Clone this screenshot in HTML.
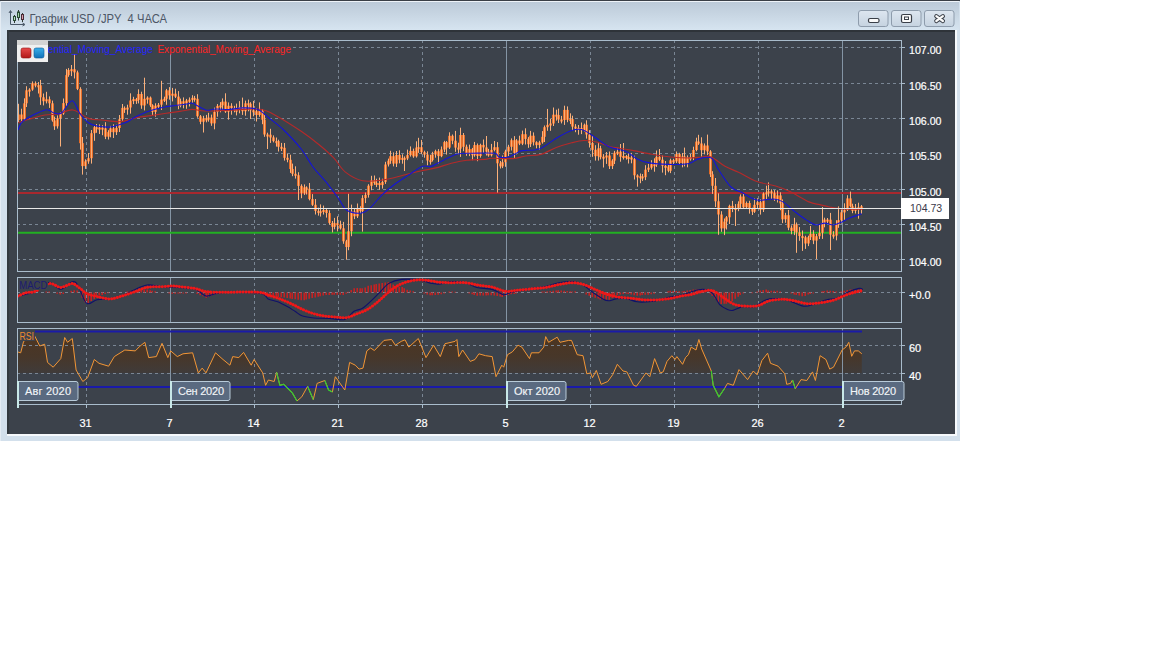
<!DOCTYPE html><html><head><meta charset="utf-8"><style>html,body{margin:0;padding:0;background:#fff;overflow:hidden}svg{display:block}</style></head><body>
<svg width="1152" height="648" viewBox="0 0 1152 648" style="font-family:'Liberation Sans',sans-serif">
<defs><linearGradient id="tg" x1="0" y1="0" x2="0" y2="1"><stop offset="0" stop-color="#bccad8"/><stop offset="1" stop-color="#d6e4f0"/></linearGradient><linearGradient id="bg" x1="0" y1="0" x2="0" y2="1"><stop offset="0" stop-color="#dde6f0"/><stop offset="1" stop-color="#c6d3e0"/></linearGradient><linearGradient id="lr" x1="0" y1="0" x2="0" y2="1"><stop offset="0" stop-color="#e84a4a"/><stop offset="1" stop-color="#b01818"/></linearGradient><linearGradient id="lb" x1="0" y1="0" x2="0" y2="1"><stop offset="0" stop-color="#3ab0ea"/><stop offset="1" stop-color="#1070b8"/></linearGradient><linearGradient id="rf" gradientUnits="userSpaceOnUse" x1="0" y1="334" x2="0" y2="373"><stop offset="0" stop-color="#4d3520"/><stop offset="0.6" stop-color="#47372a"/><stop offset="1" stop-color="#3f3b3a"/></linearGradient><clipPath id="cm"><rect x="18" y="41" width="883" height="230"/></clipPath><clipPath id="cmacd"><rect x="18" y="278" width="883" height="44"/></clipPath><clipPath id="crsi"><rect x="18" y="329" width="883" height="75"/></clipPath><clipPath id="cfill"><rect x="18" y="329" width="883" height="44"/></clipPath></defs>
<rect x="0" y="0" width="960" height="441" fill="#d3e0ec"/>
<rect x="0" y="0" width="960" height="1" fill="#3a3f46"/>
<rect x="1" y="1" width="958" height="1" fill="#eef3f8"/>
<rect x="1" y="2" width="958" height="28" fill="url(#tg)"/>
<rect x="0" y="2" width="1" height="439" fill="#e4ecf4"/>
<rect x="7" y="30" width="948" height="404" fill="#3c424b"/>
<rect x="7" y="30" width="948" height="2" fill="#2e3339"/>
<rect x="7" y="30" width="2" height="404" fill="#33393f"/>
<rect x="955" y="30" width="2" height="406" fill="#f6f9fc"/>
<rect x="7" y="434" width="950" height="2" fill="#f6f9fc"/>
<g stroke="#4a5868" stroke-width="1" fill="none"><path d="M10.5,11 V24.5 H24"/><path d="M9,13 L10.5,10.5 L12,13"/><path d="M22.5,23 L25,24.5 L22.5,26"/></g>
<path d="M14.5,15 V23 M18.5,10 V20.5 M22.5,13 V22" stroke="#2e3a34" stroke-width="1"/>
<rect x="13.5" y="16.5" width="2" height="4" fill="#b8dcc0" stroke="#2a4a34" stroke-width="1"/>
<rect x="17.5" y="12" width="2" height="5.5" fill="#a0d0a8" stroke="#2a4a34" stroke-width="1"/>
<rect x="21.5" y="14.5" width="2" height="5" fill="#d8a0b0" stroke="#4a2a34" stroke-width="1"/>
<text x="29.5" y="22.8" font-size="12" fill="#4c5666" xml:space="preserve" textLength="137.5" lengthAdjust="spacingAndGlyphs">График USD /JPY  4 ЧАСА</text>
<rect x="858.5" y="10.5" width="29.5" height="16" rx="2.5" fill="url(#bg)" stroke="#8e9cac" stroke-width="1"/>
<rect x="891.5" y="10.5" width="29.5" height="16" rx="2.5" fill="url(#bg)" stroke="#8e9cac" stroke-width="1"/>
<rect x="924.5" y="10.5" width="29.5" height="16" rx="2.5" fill="url(#bg)" stroke="#8e9cac" stroke-width="1"/>
<rect x="868.5" y="18.5" width="10.5" height="4" rx="1.5" fill="#fafafa" stroke="#3a3f48" stroke-width="1.2"/>
<rect x="901.5" y="14.5" width="10" height="8" rx="1.5" fill="#fafafa" stroke="#3a3f48" stroke-width="1.2"/><rect x="904.5" y="17" width="4" height="2.5" fill="none" stroke="#3a3f48" stroke-width="1"/>
<path d="M936.3,16.2 L942.9,21 M942.9,16.2 L936.3,21" stroke="#3a3f48" stroke-width="4.2" stroke-linecap="round"/><path d="M936.3,16.2 L942.9,21 M942.9,16.2 L936.3,21" stroke="#fafafa" stroke-width="2.2" stroke-linecap="round"/>
<rect x="17.5" y="40.5" width="884" height="231.0" fill="none" stroke="#a9bccc" stroke-width="1"/>
<rect x="17.5" y="277.5" width="884" height="45.0" fill="none" stroke="#a9bccc" stroke-width="1"/>
<rect x="17.5" y="328.5" width="884" height="76.0" fill="none" stroke="#a9bccc" stroke-width="1"/>
<path d="M18.0,373.0 L18.0,352.0 L20.7,352.8 L23.6,341.4 L34.0,334.7 L39.8,346.0 L44.6,344.2 L47.5,362.4 L53.2,367.2 L60.8,358.6 L64.7,337.5 L67.5,342.3 L72.3,338.5 L76.1,370.0 L82.8,381.5 L87.6,377.7 L94.3,359.5 L99.0,363.3 L108.6,366.2 L114.3,356.6 L124.8,350.0 L135.3,350.9 L140.0,346.1 L144.9,342.3 L148.7,357.6 L156.3,356.6 L162.0,343.3 L167.8,357.6 L170.7,350.9 L177.3,356.6 L183.0,353.8 L192.6,352.8 L198.3,372.9 L202.2,368.1 L206.0,372.9 L215.5,352.8 L223.0,359.5 L229.9,365.2 L232.7,356.6 L238.8,357.6 L243.6,352.4 L251.2,365.2 L254.1,359.5 L262.7,372.9 L265.6,385.3 L268.4,380.0 L274.2,381.5 L276.6,372.3 L279.9,385.3 L283.7,384.3 L292.3,392.9 L297.0,401.0 L301.8,396.8 L307.6,386.3 L313.3,399.6 L317.1,383.4 L324.8,380.5 L328.6,390.0 L332.4,392.0 L335.3,376.7 L344.8,390.0 L349.6,362.4 L355.3,365.2 L359.1,369.1 L363.0,368.1 L366.8,350.9 L370.6,348.0 L374.4,350.5 L384.0,340.4 L391.6,339.5 L395.4,345.2 L401.2,341.4 L405.0,339.8 L408.8,347.1 L418.3,338.5 L426.0,357.6 L433.6,345.2 L440.3,356.6 L445.0,343.7 L455.0,341.4 L456.9,339.5 L458.8,356.6 L462.6,350.0 L470.3,361.4 L475.0,359.5 L478.9,353.8 L485.6,355.7 L492.2,356.6 L496.0,376.7 L501.8,365.2 L503.7,367.2 L507.5,354.7 L512.3,351.9 L518.0,345.2 L521.8,347.1 L529.5,358.6 L531.4,352.8 L539.0,352.8 L543.8,347.1 L545.7,336.6 L548.6,342.3 L557.2,337.2 L560.0,342.3 L568.6,340.4 L571.5,340.4 L577.2,354.7 L583.0,355.7 L586.8,373.8 L590.6,372.9 L592.5,377.7 L596.3,370.4 L601.1,384.3 L607.8,381.5 L612.6,374.8 L617.3,364.3 L623.0,371.0 L626.9,371.9 L633.6,385.3 L636.4,386.3 L646.0,372.9 L649.8,376.7 L654.6,358.6 L660.3,372.9 L663.2,371.9 L667.0,361.4 L671.8,355.7 L675.0,359.5 L676.9,356.6 L682.6,364.3 L685.5,357.6 L688.4,354.7 L691.2,347.1 L696.0,350.0 L698.9,339.5 L701.7,349.0 L711.3,371.0 L713.2,385.3 L718.9,396.8 L724.7,388.2 L727.5,383.4 L733.3,385.3 L739.0,369.6 L747.6,379.6 L753.3,371.0 L757.1,374.8 L761.9,360.5 L767.6,353.2 L770.5,363.3 L778.1,366.2 L784.8,373.8 L786.7,384.3 L790.5,383.4 L792.5,380.0 L795.3,388.7 L801.0,379.6 L806.8,380.5 L812.5,371.9 L815.4,380.5 L820.1,355.7 L825.9,359.5 L829.7,369.1 L833.5,367.2 L842.1,350.0 L845.9,347.1 L848.8,342.3 L851.7,356.3 L854.5,350.9 L858.3,350.9 L861.8,353.8 L861.8,373.0 Z" fill="url(#rf)" clip-path="url(#cfill)"/>
<path d="M18,47.5 H901" stroke="#7a8694" stroke-width="1" stroke-dasharray="3,3" stroke-dashoffset="1"/>
<path d="M901,47.5 H905" stroke="#a9bccc" stroke-width="1"/>
<text x="909" y="54.0" font-size="11" fill="#ffffff" stroke="#ffffff" stroke-width="0.2" textLength="32.5" lengthAdjust="spacingAndGlyphs">107.00</text>
<path d="M18,83.5 H901" stroke="#7a8694" stroke-width="1" stroke-dasharray="3,3" stroke-dashoffset="1"/>
<path d="M901,83.5 H905" stroke="#a9bccc" stroke-width="1"/>
<text x="909" y="90.0" font-size="11" fill="#ffffff" stroke="#ffffff" stroke-width="0.2" textLength="32.5" lengthAdjust="spacingAndGlyphs">106.50</text>
<path d="M18,118.5 H901" stroke="#7a8694" stroke-width="1" stroke-dasharray="3,3" stroke-dashoffset="1"/>
<path d="M901,118.5 H905" stroke="#a9bccc" stroke-width="1"/>
<text x="909" y="125.0" font-size="11" fill="#ffffff" stroke="#ffffff" stroke-width="0.2" textLength="32.5" lengthAdjust="spacingAndGlyphs">106.00</text>
<path d="M18,153.5 H901" stroke="#7a8694" stroke-width="1" stroke-dasharray="3,3" stroke-dashoffset="1"/>
<path d="M901,153.5 H905" stroke="#a9bccc" stroke-width="1"/>
<text x="909" y="160.0" font-size="11" fill="#ffffff" stroke="#ffffff" stroke-width="0.2" textLength="32.5" lengthAdjust="spacingAndGlyphs">105.50</text>
<path d="M18,189.5 H901" stroke="#7a8694" stroke-width="1" stroke-dasharray="3,3" stroke-dashoffset="1"/>
<path d="M901,189.5 H905" stroke="#a9bccc" stroke-width="1"/>
<text x="909" y="196.0" font-size="11" fill="#ffffff" stroke="#ffffff" stroke-width="0.2" textLength="32.5" lengthAdjust="spacingAndGlyphs">105.00</text>
<path d="M18,224.5 H901" stroke="#7a8694" stroke-width="1" stroke-dasharray="3,3" stroke-dashoffset="1"/>
<path d="M901,224.5 H905" stroke="#a9bccc" stroke-width="1"/>
<text x="909" y="231.0" font-size="11" fill="#ffffff" stroke="#ffffff" stroke-width="0.2" textLength="32.5" lengthAdjust="spacingAndGlyphs">104.50</text>
<path d="M18,259.5 H901" stroke="#7a8694" stroke-width="1" stroke-dasharray="3,3" stroke-dashoffset="1"/>
<path d="M901,259.5 H905" stroke="#a9bccc" stroke-width="1"/>
<text x="909" y="266.0" font-size="11" fill="#ffffff" stroke="#ffffff" stroke-width="0.2" textLength="32.5" lengthAdjust="spacingAndGlyphs">104.00</text>
<path d="M18,292.5 H901" stroke="#7a8694" stroke-width="1" stroke-dasharray="3,3" stroke-dashoffset="1"/>
<path d="M901,292.5 H905" stroke="#a9bccc"/>
<text x="909" y="299" font-size="11" fill="#ffffff" stroke="#ffffff" stroke-width="0.2">+0.0</text>
<path d="M18,345.5 H901" stroke="#7a8694" stroke-width="1" stroke-dasharray="3,3" stroke-dashoffset="1"/>
<path d="M901,345.5 H905" stroke="#a9bccc"/>
<text x="909" y="351.5" font-size="11" fill="#ffffff" stroke="#ffffff" stroke-width="0.2">60</text>
<path d="M18,373.5 H901" stroke="#7a8694" stroke-width="1" stroke-dasharray="3,3" stroke-dashoffset="1"/>
<path d="M901,373.5 H905" stroke="#a9bccc"/>
<text x="909" y="379.5" font-size="11" fill="#ffffff" stroke="#ffffff" stroke-width="0.2">40</text>
<path d="M86.5,41.0 V271.0" stroke="#7a8694" stroke-width="1" stroke-dasharray="3,3" stroke-dashoffset="1"/>
<path d="M86.5,278.0 V322.0" stroke="#7a8694" stroke-width="1" stroke-dasharray="3,3" stroke-dashoffset="1"/>
<path d="M86.5,329.0 V404.0" stroke="#7a8694" stroke-width="1" stroke-dasharray="3,3" stroke-dashoffset="1"/>
<path d="M86.5,404.5 V408" stroke="#a9bccc"/>
<text x="85.5" y="427" font-size="11" fill="#ffffff" stroke="#ffffff" stroke-width="0.2" text-anchor="middle">31</text>
<path d="M170.5,41.0 V271.0" stroke="#8494a4" stroke-width="1"/>
<path d="M170.5,278.0 V322.0" stroke="#8494a4" stroke-width="1"/>
<path d="M170.5,329.0 V404.0" stroke="#8494a4" stroke-width="1"/>
<path d="M170.5,404.5 V408" stroke="#a9bccc"/>
<text x="169.5" y="427" font-size="11" fill="#ffffff" stroke="#ffffff" stroke-width="0.2" text-anchor="middle">7</text>
<path d="M254.5,41.0 V271.0" stroke="#7a8694" stroke-width="1" stroke-dasharray="3,3" stroke-dashoffset="1"/>
<path d="M254.5,278.0 V322.0" stroke="#7a8694" stroke-width="1" stroke-dasharray="3,3" stroke-dashoffset="1"/>
<path d="M254.5,329.0 V404.0" stroke="#7a8694" stroke-width="1" stroke-dasharray="3,3" stroke-dashoffset="1"/>
<path d="M254.5,404.5 V408" stroke="#a9bccc"/>
<text x="253.5" y="427" font-size="11" fill="#ffffff" stroke="#ffffff" stroke-width="0.2" text-anchor="middle">14</text>
<path d="M338.5,41.0 V271.0" stroke="#7a8694" stroke-width="1" stroke-dasharray="3,3" stroke-dashoffset="1"/>
<path d="M338.5,278.0 V322.0" stroke="#7a8694" stroke-width="1" stroke-dasharray="3,3" stroke-dashoffset="1"/>
<path d="M338.5,329.0 V404.0" stroke="#7a8694" stroke-width="1" stroke-dasharray="3,3" stroke-dashoffset="1"/>
<path d="M338.5,404.5 V408" stroke="#a9bccc"/>
<text x="337.5" y="427" font-size="11" fill="#ffffff" stroke="#ffffff" stroke-width="0.2" text-anchor="middle">21</text>
<path d="M422.5,41.0 V271.0" stroke="#7a8694" stroke-width="1" stroke-dasharray="3,3" stroke-dashoffset="1"/>
<path d="M422.5,278.0 V322.0" stroke="#7a8694" stroke-width="1" stroke-dasharray="3,3" stroke-dashoffset="1"/>
<path d="M422.5,329.0 V404.0" stroke="#7a8694" stroke-width="1" stroke-dasharray="3,3" stroke-dashoffset="1"/>
<path d="M422.5,404.5 V408" stroke="#a9bccc"/>
<text x="421.5" y="427" font-size="11" fill="#ffffff" stroke="#ffffff" stroke-width="0.2" text-anchor="middle">28</text>
<path d="M506.5,41.0 V271.0" stroke="#8494a4" stroke-width="1"/>
<path d="M506.5,278.0 V322.0" stroke="#8494a4" stroke-width="1"/>
<path d="M506.5,329.0 V404.0" stroke="#8494a4" stroke-width="1"/>
<path d="M506.5,404.5 V408" stroke="#a9bccc"/>
<text x="505.5" y="427" font-size="11" fill="#ffffff" stroke="#ffffff" stroke-width="0.2" text-anchor="middle">5</text>
<path d="M590.5,41.0 V271.0" stroke="#7a8694" stroke-width="1" stroke-dasharray="3,3" stroke-dashoffset="1"/>
<path d="M590.5,278.0 V322.0" stroke="#7a8694" stroke-width="1" stroke-dasharray="3,3" stroke-dashoffset="1"/>
<path d="M590.5,329.0 V404.0" stroke="#7a8694" stroke-width="1" stroke-dasharray="3,3" stroke-dashoffset="1"/>
<path d="M590.5,404.5 V408" stroke="#a9bccc"/>
<text x="589.5" y="427" font-size="11" fill="#ffffff" stroke="#ffffff" stroke-width="0.2" text-anchor="middle">12</text>
<path d="M674.5,41.0 V271.0" stroke="#7a8694" stroke-width="1" stroke-dasharray="3,3" stroke-dashoffset="1"/>
<path d="M674.5,278.0 V322.0" stroke="#7a8694" stroke-width="1" stroke-dasharray="3,3" stroke-dashoffset="1"/>
<path d="M674.5,329.0 V404.0" stroke="#7a8694" stroke-width="1" stroke-dasharray="3,3" stroke-dashoffset="1"/>
<path d="M674.5,404.5 V408" stroke="#a9bccc"/>
<text x="673.5" y="427" font-size="11" fill="#ffffff" stroke="#ffffff" stroke-width="0.2" text-anchor="middle">19</text>
<path d="M758.5,41.0 V271.0" stroke="#7a8694" stroke-width="1" stroke-dasharray="3,3" stroke-dashoffset="1"/>
<path d="M758.5,278.0 V322.0" stroke="#7a8694" stroke-width="1" stroke-dasharray="3,3" stroke-dashoffset="1"/>
<path d="M758.5,329.0 V404.0" stroke="#7a8694" stroke-width="1" stroke-dasharray="3,3" stroke-dashoffset="1"/>
<path d="M758.5,404.5 V408" stroke="#a9bccc"/>
<text x="757.5" y="427" font-size="11" fill="#ffffff" stroke="#ffffff" stroke-width="0.2" text-anchor="middle">26</text>
<path d="M842.5,41.0 V271.0" stroke="#8494a4" stroke-width="1"/>
<path d="M842.5,278.0 V322.0" stroke="#8494a4" stroke-width="1"/>
<path d="M842.5,329.0 V404.0" stroke="#8494a4" stroke-width="1"/>
<path d="M842.5,404.5 V408" stroke="#a9bccc"/>
<text x="841.5" y="427" font-size="11" fill="#ffffff" stroke="#ffffff" stroke-width="0.2" text-anchor="middle">2</text>
<g clip-path="url(#cm)">
<path d="M18,193 H901" stroke="#a8282e" stroke-width="2"/>
<path d="M18,232.8 H901" stroke="#22b022" stroke-width="2"/>
<rect x="17" y="114.5" width="3" height="5.5" fill="#e46c28"/>
<rect x="18" y="103.8" width="1" height="18.5" fill="#fbb07a"/>
<rect x="20" y="114.5" width="3" height="4.8" fill="#e46c28"/>
<rect x="21" y="108.7" width="1" height="14.2" fill="#fbb07a"/>
<rect x="23" y="103.3" width="3" height="15.9" fill="#e46c28"/>
<rect x="24" y="98.3" width="1" height="22.7" fill="#fbb07a"/>
<rect x="25" y="90.3" width="3" height="13.0" fill="#e46c28"/>
<rect x="26" y="86.2" width="1" height="20.8" fill="#fbb07a"/>
<rect x="28" y="89.6" width="3" height="2.0" fill="#e46c28"/>
<rect x="29" y="88.2" width="1" height="8.4" fill="#fbb07a"/>
<rect x="31" y="83.2" width="3" height="6.4" fill="#e46c28"/>
<rect x="32" y="81.4" width="1" height="9.4" fill="#fbb07a"/>
<rect x="34" y="83.2" width="3" height="2.4" fill="#e46c28"/>
<rect x="35" y="81.4" width="1" height="5.9" fill="#fbb07a"/>
<rect x="37" y="85.3" width="3" height="2.0" fill="#e46c28"/>
<rect x="38" y="82.0" width="1" height="11.5" fill="#fbb07a"/>
<rect x="39" y="85.3" width="3" height="12.0" fill="#e46c28"/>
<rect x="40" y="79.9" width="1" height="25.0" fill="#fbb07a"/>
<rect x="42" y="97.3" width="3" height="3.9" fill="#e46c28"/>
<rect x="43" y="93.5" width="1" height="11.9" fill="#fbb07a"/>
<rect x="45" y="99.3" width="3" height="2.0" fill="#e46c28"/>
<rect x="46" y="91.8" width="1" height="11.6" fill="#fbb07a"/>
<rect x="48" y="99.3" width="3" height="4.0" fill="#e46c28"/>
<rect x="49" y="96.4" width="1" height="11.5" fill="#fbb07a"/>
<rect x="51" y="103.3" width="3" height="17.1" fill="#e46c28"/>
<rect x="52" y="100.6" width="1" height="21.1" fill="#fbb07a"/>
<rect x="53" y="120.4" width="3" height="5.9" fill="#e46c28"/>
<rect x="54" y="116.6" width="1" height="13.3" fill="#fbb07a"/>
<rect x="56" y="118.2" width="3" height="8.1" fill="#e46c28"/>
<rect x="57" y="115.4" width="1" height="13.2" fill="#fbb07a"/>
<rect x="59" y="113.4" width="3" height="4.8" fill="#e46c28"/>
<rect x="60" y="112.2" width="1" height="34.3" fill="#fbb07a"/>
<rect x="62" y="103.1" width="3" height="10.4" fill="#e46c28"/>
<rect x="63" y="98.5" width="1" height="16.3" fill="#fbb07a"/>
<rect x="65" y="75.1" width="3" height="28.0" fill="#e46c28"/>
<rect x="66" y="68.9" width="1" height="37.1" fill="#fbb07a"/>
<rect x="67" y="70.0" width="3" height="5.1" fill="#e46c28"/>
<rect x="68" y="68.1" width="1" height="8.7" fill="#fbb07a"/>
<rect x="70" y="69.2" width="3" height="2.0" fill="#e46c28"/>
<rect x="71" y="65.0" width="1" height="11.1" fill="#fbb07a"/>
<rect x="73" y="69.2" width="3" height="3.2" fill="#e46c28"/>
<rect x="74" y="53.6" width="1" height="24.9" fill="#fbb07a"/>
<rect x="76" y="72.4" width="3" height="16.5" fill="#e46c28"/>
<rect x="77" y="70.6" width="1" height="19.5" fill="#fbb07a"/>
<rect x="79" y="88.9" width="3" height="54.3" fill="#e46c28"/>
<rect x="80" y="87.2" width="1" height="62.4" fill="#fbb07a"/>
<rect x="81" y="143.1" width="3" height="23.0" fill="#e46c28"/>
<rect x="82" y="137.0" width="1" height="37.6" fill="#fbb07a"/>
<rect x="84" y="161.4" width="3" height="4.7" fill="#e46c28"/>
<rect x="85" y="159.3" width="1" height="9.6" fill="#fbb07a"/>
<rect x="87" y="158.2" width="3" height="3.2" fill="#e46c28"/>
<rect x="88" y="153.0" width="1" height="10.8" fill="#fbb07a"/>
<rect x="90" y="133.2" width="3" height="25.0" fill="#e46c28"/>
<rect x="91" y="130.0" width="1" height="33.6" fill="#fbb07a"/>
<rect x="93" y="127.2" width="3" height="6.0" fill="#e46c28"/>
<rect x="94" y="126.0" width="1" height="14.8" fill="#fbb07a"/>
<rect x="95" y="127.2" width="3" height="2.0" fill="#e46c28"/>
<rect x="96" y="124.0" width="1" height="8.8" fill="#fbb07a"/>
<rect x="98" y="127.6" width="3" height="2.0" fill="#e46c28"/>
<rect x="99" y="124.4" width="1" height="9.6" fill="#fbb07a"/>
<rect x="101" y="127.6" width="3" height="2.0" fill="#e46c28"/>
<rect x="102" y="125.2" width="1" height="10.0" fill="#fbb07a"/>
<rect x="104" y="128.4" width="3" height="8.3" fill="#e46c28"/>
<rect x="105" y="122.2" width="1" height="16.9" fill="#fbb07a"/>
<rect x="107" y="132.1" width="3" height="4.6" fill="#e46c28"/>
<rect x="108" y="130.2" width="1" height="9.3" fill="#fbb07a"/>
<rect x="109" y="128.4" width="3" height="3.7" fill="#e46c28"/>
<rect x="110" y="125.9" width="1" height="11.4" fill="#fbb07a"/>
<rect x="112" y="128.4" width="3" height="3.8" fill="#e46c28"/>
<rect x="113" y="124.3" width="1" height="13.7" fill="#fbb07a"/>
<rect x="115" y="128.0" width="3" height="4.2" fill="#e46c28"/>
<rect x="116" y="124.8" width="1" height="10.2" fill="#fbb07a"/>
<rect x="118" y="119.3" width="3" height="8.7" fill="#e46c28"/>
<rect x="119" y="115.0" width="1" height="17.0" fill="#fbb07a"/>
<rect x="121" y="107.9" width="3" height="11.3" fill="#e46c28"/>
<rect x="122" y="104.0" width="1" height="16.9" fill="#fbb07a"/>
<rect x="123" y="107.9" width="3" height="2.0" fill="#e46c28"/>
<rect x="124" y="106.4" width="1" height="6.5" fill="#fbb07a"/>
<rect x="126" y="107.6" width="3" height="2.0" fill="#e46c28"/>
<rect x="127" y="104.7" width="1" height="10.0" fill="#fbb07a"/>
<rect x="129" y="100.5" width="3" height="7.0" fill="#e46c28"/>
<rect x="130" y="93.3" width="1" height="20.3" fill="#fbb07a"/>
<rect x="132" y="99.1" width="3" height="2.0" fill="#e46c28"/>
<rect x="133" y="96.8" width="1" height="7.3" fill="#fbb07a"/>
<rect x="135" y="99.1" width="3" height="2.0" fill="#e46c28"/>
<rect x="136" y="97.9" width="1" height="6.0" fill="#fbb07a"/>
<rect x="137" y="94.0" width="3" height="5.9" fill="#e46c28"/>
<rect x="138" y="89.3" width="1" height="14.1" fill="#fbb07a"/>
<rect x="140" y="94.0" width="3" height="11.4" fill="#e46c28"/>
<rect x="141" y="91.7" width="1" height="17.1" fill="#fbb07a"/>
<rect x="143" y="98.8" width="3" height="6.7" fill="#e46c28"/>
<rect x="144" y="77.7" width="1" height="32.7" fill="#fbb07a"/>
<rect x="146" y="97.6" width="3" height="2.0" fill="#e46c28"/>
<rect x="147" y="96.3" width="1" height="7.4" fill="#fbb07a"/>
<rect x="149" y="97.6" width="3" height="7.7" fill="#e46c28"/>
<rect x="150" y="96.5" width="1" height="10.4" fill="#fbb07a"/>
<rect x="151" y="105.2" width="3" height="6.6" fill="#e46c28"/>
<rect x="152" y="104.2" width="1" height="10.9" fill="#fbb07a"/>
<rect x="154" y="105.7" width="3" height="6.2" fill="#e46c28"/>
<rect x="155" y="103.3" width="1" height="13.4" fill="#fbb07a"/>
<rect x="157" y="104.8" width="3" height="2.0" fill="#e46c28"/>
<rect x="158" y="103.0" width="1" height="5.3" fill="#fbb07a"/>
<rect x="160" y="99.6" width="3" height="5.1" fill="#e46c28"/>
<rect x="161" y="80.8" width="1" height="29.2" fill="#fbb07a"/>
<rect x="163" y="98.8" width="3" height="2.0" fill="#e46c28"/>
<rect x="164" y="96.7" width="1" height="5.3" fill="#fbb07a"/>
<rect x="165" y="90.3" width="3" height="8.5" fill="#e46c28"/>
<rect x="166" y="88.9" width="1" height="15.9" fill="#fbb07a"/>
<rect x="168" y="90.3" width="3" height="5.1" fill="#e46c28"/>
<rect x="169" y="87.1" width="1" height="12.6" fill="#fbb07a"/>
<rect x="171" y="93.7" width="3" height="2.0" fill="#e46c28"/>
<rect x="172" y="87.9" width="1" height="13.5" fill="#fbb07a"/>
<rect x="174" y="93.7" width="3" height="3.0" fill="#e46c28"/>
<rect x="175" y="88.7" width="1" height="9.3" fill="#fbb07a"/>
<rect x="177" y="96.6" width="3" height="9.1" fill="#e46c28"/>
<rect x="178" y="91.1" width="1" height="18.1" fill="#fbb07a"/>
<rect x="179" y="101.3" width="3" height="4.4" fill="#e46c28"/>
<rect x="180" y="98.6" width="1" height="8.7" fill="#fbb07a"/>
<rect x="182" y="101.3" width="3" height="2.3" fill="#e46c28"/>
<rect x="183" y="97.4" width="1" height="10.9" fill="#fbb07a"/>
<rect x="185" y="100.5" width="3" height="3.1" fill="#e46c28"/>
<rect x="186" y="98.9" width="1" height="9.9" fill="#fbb07a"/>
<rect x="188" y="99.7" width="3" height="2.0" fill="#e46c28"/>
<rect x="189" y="97.4" width="1" height="9.1" fill="#fbb07a"/>
<rect x="191" y="97.9" width="3" height="2.0" fill="#e46c28"/>
<rect x="192" y="95.2" width="1" height="7.6" fill="#fbb07a"/>
<rect x="193" y="97.9" width="3" height="2.0" fill="#e46c28"/>
<rect x="194" y="95.9" width="1" height="5.8" fill="#fbb07a"/>
<rect x="196" y="98.8" width="3" height="17.4" fill="#e46c28"/>
<rect x="197" y="94.2" width="1" height="23.5" fill="#fbb07a"/>
<rect x="199" y="116.3" width="3" height="5.5" fill="#e46c28"/>
<rect x="200" y="115.0" width="1" height="9.2" fill="#fbb07a"/>
<rect x="202" y="118.4" width="3" height="3.4" fill="#e46c28"/>
<rect x="203" y="115.8" width="1" height="16.7" fill="#fbb07a"/>
<rect x="205" y="118.4" width="3" height="2.0" fill="#e46c28"/>
<rect x="206" y="114.9" width="1" height="7.4" fill="#fbb07a"/>
<rect x="207" y="117.6" width="3" height="2.0" fill="#e46c28"/>
<rect x="208" y="112.8" width="1" height="8.9" fill="#fbb07a"/>
<rect x="210" y="117.6" width="3" height="5.8" fill="#e46c28"/>
<rect x="211" y="114.6" width="1" height="11.2" fill="#fbb07a"/>
<rect x="213" y="111.8" width="3" height="11.6" fill="#e46c28"/>
<rect x="214" y="107.6" width="1" height="21.7" fill="#fbb07a"/>
<rect x="216" y="105.9" width="3" height="5.9" fill="#e46c28"/>
<rect x="217" y="104.0" width="1" height="12.7" fill="#fbb07a"/>
<rect x="219" y="105.4" width="3" height="2.0" fill="#e46c28"/>
<rect x="220" y="102.1" width="1" height="10.2" fill="#fbb07a"/>
<rect x="221" y="101.6" width="3" height="3.8" fill="#e46c28"/>
<rect x="222" y="98.4" width="1" height="11.8" fill="#fbb07a"/>
<rect x="224" y="101.6" width="3" height="10.0" fill="#e46c28"/>
<rect x="225" y="93.3" width="1" height="19.6" fill="#fbb07a"/>
<rect x="227" y="105.8" width="3" height="5.9" fill="#e46c28"/>
<rect x="228" y="102.4" width="1" height="17.2" fill="#fbb07a"/>
<rect x="230" y="105.8" width="3" height="2.2" fill="#e46c28"/>
<rect x="231" y="103.2" width="1" height="11.5" fill="#fbb07a"/>
<rect x="233" y="108.0" width="3" height="2.0" fill="#e46c28"/>
<rect x="234" y="105.8" width="1" height="6.5" fill="#fbb07a"/>
<rect x="235" y="109.7" width="3" height="2.0" fill="#e46c28"/>
<rect x="236" y="103.6" width="1" height="11.8" fill="#fbb07a"/>
<rect x="238" y="107.3" width="3" height="2.5" fill="#e46c28"/>
<rect x="239" y="101.1" width="1" height="12.2" fill="#fbb07a"/>
<rect x="241" y="107.3" width="3" height="3.9" fill="#e46c28"/>
<rect x="242" y="97.6" width="1" height="17.3" fill="#fbb07a"/>
<rect x="244" y="103.3" width="3" height="7.9" fill="#e46c28"/>
<rect x="245" y="100.6" width="1" height="15.1" fill="#fbb07a"/>
<rect x="247" y="103.3" width="3" height="2.0" fill="#e46c28"/>
<rect x="248" y="99.6" width="1" height="11.7" fill="#fbb07a"/>
<rect x="249" y="103.7" width="3" height="6.6" fill="#e46c28"/>
<rect x="250" y="102.2" width="1" height="16.8" fill="#fbb07a"/>
<rect x="252" y="110.3" width="3" height="2.0" fill="#e46c28"/>
<rect x="253" y="100.9" width="1" height="15.4" fill="#fbb07a"/>
<rect x="255" y="111.2" width="3" height="3.8" fill="#e46c28"/>
<rect x="256" y="108.3" width="1" height="13.2" fill="#fbb07a"/>
<rect x="258" y="110.7" width="3" height="4.3" fill="#e46c28"/>
<rect x="259" y="102.4" width="1" height="14.4" fill="#fbb07a"/>
<rect x="261" y="110.7" width="3" height="9.0" fill="#e46c28"/>
<rect x="262" y="109.0" width="1" height="15.2" fill="#fbb07a"/>
<rect x="263" y="119.6" width="3" height="14.9" fill="#e46c28"/>
<rect x="264" y="115.1" width="1" height="21.7" fill="#fbb07a"/>
<rect x="266" y="134.5" width="3" height="2.0" fill="#e46c28"/>
<rect x="267" y="132.7" width="1" height="16.3" fill="#fbb07a"/>
<rect x="269" y="134.7" width="3" height="2.8" fill="#e46c28"/>
<rect x="270" y="128.8" width="1" height="14.1" fill="#fbb07a"/>
<rect x="272" y="137.4" width="3" height="3.7" fill="#e46c28"/>
<rect x="273" y="135.4" width="1" height="7.0" fill="#fbb07a"/>
<rect x="275" y="141.1" width="3" height="2.0" fill="#e46c28"/>
<rect x="276" y="137.5" width="1" height="9.1" fill="#fbb07a"/>
<rect x="277" y="141.1" width="3" height="5.7" fill="#e46c28"/>
<rect x="278" y="139.7" width="1" height="11.8" fill="#fbb07a"/>
<rect x="280" y="146.8" width="3" height="2.0" fill="#e46c28"/>
<rect x="281" y="142.9" width="1" height="8.1" fill="#fbb07a"/>
<rect x="283" y="147.8" width="3" height="10.0" fill="#e46c28"/>
<rect x="284" y="143.0" width="1" height="17.6" fill="#fbb07a"/>
<rect x="286" y="157.8" width="3" height="2.0" fill="#e46c28"/>
<rect x="287" y="153.8" width="1" height="8.5" fill="#fbb07a"/>
<rect x="289" y="159.8" width="3" height="9.2" fill="#e46c28"/>
<rect x="290" y="154.7" width="1" height="18.2" fill="#fbb07a"/>
<rect x="291" y="169.0" width="3" height="4.8" fill="#e46c28"/>
<rect x="292" y="163.6" width="1" height="12.6" fill="#fbb07a"/>
<rect x="294" y="173.8" width="3" height="2.0" fill="#e46c28"/>
<rect x="295" y="166.3" width="1" height="12.3" fill="#fbb07a"/>
<rect x="297" y="175.2" width="3" height="10.7" fill="#e46c28"/>
<rect x="298" y="172.2" width="1" height="27.8" fill="#fbb07a"/>
<rect x="300" y="185.9" width="3" height="7.3" fill="#e46c28"/>
<rect x="301" y="184.3" width="1" height="13.9" fill="#fbb07a"/>
<rect x="303" y="187.4" width="3" height="5.9" fill="#e46c28"/>
<rect x="304" y="184.4" width="1" height="10.5" fill="#fbb07a"/>
<rect x="305" y="187.4" width="3" height="2.0" fill="#e46c28"/>
<rect x="306" y="186.3" width="1" height="8.2" fill="#fbb07a"/>
<rect x="308" y="188.8" width="3" height="10.3" fill="#e46c28"/>
<rect x="309" y="183.0" width="1" height="17.4" fill="#fbb07a"/>
<rect x="311" y="199.1" width="3" height="5.7" fill="#e46c28"/>
<rect x="312" y="194.1" width="1" height="11.8" fill="#fbb07a"/>
<rect x="314" y="204.8" width="3" height="6.1" fill="#e46c28"/>
<rect x="315" y="199.0" width="1" height="15.5" fill="#fbb07a"/>
<rect x="317" y="210.9" width="3" height="2.0" fill="#e46c28"/>
<rect x="318" y="207.7" width="1" height="7.9" fill="#fbb07a"/>
<rect x="319" y="211.2" width="3" height="2.0" fill="#e46c28"/>
<rect x="320" y="204.4" width="1" height="12.2" fill="#fbb07a"/>
<rect x="322" y="210.0" width="3" height="2.0" fill="#e46c28"/>
<rect x="323" y="205.6" width="1" height="8.9" fill="#fbb07a"/>
<rect x="325" y="210.0" width="3" height="3.0" fill="#e46c28"/>
<rect x="326" y="208.9" width="1" height="8.7" fill="#fbb07a"/>
<rect x="328" y="213.1" width="3" height="9.8" fill="#e46c28"/>
<rect x="329" y="210.3" width="1" height="14.3" fill="#fbb07a"/>
<rect x="331" y="222.9" width="3" height="3.9" fill="#e46c28"/>
<rect x="332" y="221.0" width="1" height="11.4" fill="#fbb07a"/>
<rect x="333" y="223.2" width="3" height="3.6" fill="#e46c28"/>
<rect x="334" y="217.9" width="1" height="11.4" fill="#fbb07a"/>
<rect x="336" y="223.2" width="3" height="2.0" fill="#e46c28"/>
<rect x="337" y="216.3" width="1" height="15.1" fill="#fbb07a"/>
<rect x="339" y="224.6" width="3" height="3.7" fill="#e46c28"/>
<rect x="340" y="220.7" width="1" height="8.8" fill="#fbb07a"/>
<rect x="342" y="228.3" width="3" height="13.0" fill="#e46c28"/>
<rect x="343" y="221.9" width="1" height="21.9" fill="#fbb07a"/>
<rect x="345" y="241.3" width="3" height="5.7" fill="#e46c28"/>
<rect x="346" y="239.8" width="1" height="19.9" fill="#fbb07a"/>
<rect x="347" y="231.3" width="3" height="15.7" fill="#e46c28"/>
<rect x="348" y="193.8" width="1" height="56.4" fill="#fbb07a"/>
<rect x="350" y="211.5" width="3" height="19.8" fill="#e46c28"/>
<rect x="351" y="204.6" width="1" height="31.6" fill="#fbb07a"/>
<rect x="353" y="211.5" width="3" height="4.8" fill="#e46c28"/>
<rect x="354" y="208.7" width="1" height="10.4" fill="#fbb07a"/>
<rect x="356" y="208.0" width="3" height="8.3" fill="#e46c28"/>
<rect x="357" y="203.5" width="1" height="14.5" fill="#fbb07a"/>
<rect x="359" y="208.0" width="3" height="3.1" fill="#e46c28"/>
<rect x="360" y="206.2" width="1" height="7.3" fill="#fbb07a"/>
<rect x="361" y="198.1" width="3" height="13.0" fill="#e46c28"/>
<rect x="362" y="195.2" width="1" height="36.4" fill="#fbb07a"/>
<rect x="364" y="194.9" width="3" height="3.2" fill="#e46c28"/>
<rect x="365" y="192.5" width="1" height="10.6" fill="#fbb07a"/>
<rect x="367" y="185.7" width="3" height="9.2" fill="#e46c28"/>
<rect x="368" y="184.2" width="1" height="13.4" fill="#fbb07a"/>
<rect x="370" y="180.3" width="3" height="5.5" fill="#e46c28"/>
<rect x="371" y="175.8" width="1" height="14.4" fill="#fbb07a"/>
<rect x="373" y="180.3" width="3" height="2.7" fill="#e46c28"/>
<rect x="374" y="175.5" width="1" height="9.3" fill="#fbb07a"/>
<rect x="375" y="182.9" width="3" height="2.0" fill="#e46c28"/>
<rect x="376" y="178.7" width="1" height="8.4" fill="#fbb07a"/>
<rect x="378" y="183.1" width="3" height="2.0" fill="#e46c28"/>
<rect x="379" y="177.6" width="1" height="12.2" fill="#fbb07a"/>
<rect x="381" y="181.9" width="3" height="3.2" fill="#e46c28"/>
<rect x="382" y="178.7" width="1" height="9.9" fill="#fbb07a"/>
<rect x="384" y="164.5" width="3" height="17.4" fill="#e46c28"/>
<rect x="385" y="161.8" width="1" height="22.1" fill="#fbb07a"/>
<rect x="387" y="160.7" width="3" height="3.8" fill="#e46c28"/>
<rect x="388" y="158.6" width="1" height="7.9" fill="#fbb07a"/>
<rect x="389" y="156.2" width="3" height="4.6" fill="#e46c28"/>
<rect x="390" y="150.8" width="1" height="13.0" fill="#fbb07a"/>
<rect x="392" y="156.2" width="3" height="7.4" fill="#e46c28"/>
<rect x="393" y="152.4" width="1" height="14.0" fill="#fbb07a"/>
<rect x="395" y="155.0" width="3" height="8.6" fill="#e46c28"/>
<rect x="396" y="151.0" width="1" height="16.0" fill="#fbb07a"/>
<rect x="398" y="155.0" width="3" height="4.8" fill="#e46c28"/>
<rect x="399" y="150.3" width="1" height="13.0" fill="#fbb07a"/>
<rect x="401" y="157.9" width="3" height="2.0" fill="#e46c28"/>
<rect x="402" y="154.3" width="1" height="9.4" fill="#fbb07a"/>
<rect x="403" y="157.9" width="3" height="2.0" fill="#e46c28"/>
<rect x="404" y="156.4" width="1" height="14.6" fill="#fbb07a"/>
<rect x="406" y="155.1" width="3" height="3.4" fill="#e46c28"/>
<rect x="407" y="149.6" width="1" height="10.5" fill="#fbb07a"/>
<rect x="409" y="150.9" width="3" height="4.2" fill="#e46c28"/>
<rect x="410" y="146.4" width="1" height="10.2" fill="#fbb07a"/>
<rect x="412" y="150.9" width="3" height="5.5" fill="#e46c28"/>
<rect x="413" y="148.6" width="1" height="9.2" fill="#fbb07a"/>
<rect x="415" y="147.6" width="3" height="8.8" fill="#e46c28"/>
<rect x="416" y="141.3" width="1" height="16.3" fill="#fbb07a"/>
<rect x="417" y="147.2" width="3" height="2.0" fill="#e46c28"/>
<rect x="418" y="137.8" width="1" height="15.1" fill="#fbb07a"/>
<rect x="420" y="147.2" width="3" height="5.0" fill="#e46c28"/>
<rect x="421" y="139.9" width="1" height="14.3" fill="#fbb07a"/>
<rect x="423" y="152.2" width="3" height="2.4" fill="#e46c28"/>
<rect x="424" y="150.7" width="1" height="7.0" fill="#fbb07a"/>
<rect x="426" y="154.6" width="3" height="5.9" fill="#e46c28"/>
<rect x="427" y="151.3" width="1" height="14.0" fill="#fbb07a"/>
<rect x="429" y="160.2" width="3" height="2.0" fill="#e46c28"/>
<rect x="430" y="154.8" width="1" height="9.7" fill="#fbb07a"/>
<rect x="431" y="154.5" width="3" height="5.6" fill="#e46c28"/>
<rect x="432" y="151.8" width="1" height="9.7" fill="#fbb07a"/>
<rect x="434" y="151.2" width="3" height="3.3" fill="#e46c28"/>
<rect x="435" y="149.7" width="1" height="8.0" fill="#fbb07a"/>
<rect x="437" y="151.2" width="3" height="4.9" fill="#e46c28"/>
<rect x="438" y="149.1" width="1" height="14.5" fill="#fbb07a"/>
<rect x="440" y="149.5" width="3" height="6.7" fill="#e46c28"/>
<rect x="441" y="146.5" width="1" height="10.7" fill="#fbb07a"/>
<rect x="443" y="142.1" width="3" height="7.4" fill="#e46c28"/>
<rect x="444" y="140.8" width="1" height="11.3" fill="#fbb07a"/>
<rect x="445" y="142.1" width="3" height="5.6" fill="#e46c28"/>
<rect x="446" y="141.0" width="1" height="13.6" fill="#fbb07a"/>
<rect x="448" y="135.8" width="3" height="11.8" fill="#e46c28"/>
<rect x="449" y="132.3" width="1" height="16.7" fill="#fbb07a"/>
<rect x="451" y="135.8" width="3" height="4.9" fill="#e46c28"/>
<rect x="452" y="134.5" width="1" height="9.7" fill="#fbb07a"/>
<rect x="454" y="140.7" width="3" height="6.9" fill="#e46c28"/>
<rect x="455" y="130.9" width="1" height="20.9" fill="#fbb07a"/>
<rect x="457" y="147.6" width="3" height="2.0" fill="#e46c28"/>
<rect x="458" y="142.7" width="1" height="11.5" fill="#fbb07a"/>
<rect x="459" y="135.0" width="3" height="13.6" fill="#e46c28"/>
<rect x="460" y="127.7" width="1" height="29.2" fill="#fbb07a"/>
<rect x="462" y="135.0" width="3" height="11.8" fill="#e46c28"/>
<rect x="463" y="133.0" width="1" height="18.2" fill="#fbb07a"/>
<rect x="465" y="146.7" width="3" height="7.0" fill="#e46c28"/>
<rect x="466" y="144.6" width="1" height="11.2" fill="#fbb07a"/>
<rect x="468" y="149.1" width="3" height="4.6" fill="#e46c28"/>
<rect x="469" y="144.6" width="1" height="11.5" fill="#fbb07a"/>
<rect x="471" y="149.1" width="3" height="6.1" fill="#e46c28"/>
<rect x="472" y="147.9" width="1" height="12.3" fill="#fbb07a"/>
<rect x="473" y="145.1" width="3" height="10.1" fill="#e46c28"/>
<rect x="474" y="141.9" width="1" height="14.8" fill="#fbb07a"/>
<rect x="476" y="145.1" width="3" height="10.8" fill="#e46c28"/>
<rect x="477" y="143.5" width="1" height="17.7" fill="#fbb07a"/>
<rect x="479" y="144.9" width="3" height="11.1" fill="#e46c28"/>
<rect x="480" y="143.7" width="1" height="13.9" fill="#fbb07a"/>
<rect x="482" y="144.9" width="3" height="2.5" fill="#e46c28"/>
<rect x="483" y="139.5" width="1" height="13.4" fill="#fbb07a"/>
<rect x="485" y="147.4" width="3" height="4.2" fill="#e46c28"/>
<rect x="486" y="136.0" width="1" height="19.5" fill="#fbb07a"/>
<rect x="487" y="151.7" width="3" height="3.7" fill="#e46c28"/>
<rect x="488" y="148.9" width="1" height="7.8" fill="#fbb07a"/>
<rect x="490" y="149.9" width="3" height="5.4" fill="#e46c28"/>
<rect x="491" y="143.9" width="1" height="12.6" fill="#fbb07a"/>
<rect x="493" y="147.2" width="3" height="2.7" fill="#e46c28"/>
<rect x="494" y="141.0" width="1" height="10.3" fill="#fbb07a"/>
<rect x="496" y="147.2" width="3" height="16.1" fill="#e46c28"/>
<rect x="497" y="142.1" width="1" height="50.5" fill="#fbb07a"/>
<rect x="499" y="163.4" width="3" height="2.9" fill="#e46c28"/>
<rect x="500" y="161.0" width="1" height="7.5" fill="#fbb07a"/>
<rect x="501" y="162.2" width="3" height="4.1" fill="#e46c28"/>
<rect x="502" y="155.5" width="1" height="12.6" fill="#fbb07a"/>
<rect x="504" y="151.5" width="3" height="10.7" fill="#e46c28"/>
<rect x="505" y="149.7" width="1" height="17.1" fill="#fbb07a"/>
<rect x="507" y="146.8" width="3" height="4.7" fill="#e46c28"/>
<rect x="508" y="144.8" width="1" height="11.4" fill="#fbb07a"/>
<rect x="510" y="140.2" width="3" height="6.6" fill="#e46c28"/>
<rect x="511" y="138.4" width="1" height="12.1" fill="#fbb07a"/>
<rect x="513" y="140.2" width="3" height="12.7" fill="#e46c28"/>
<rect x="514" y="136.1" width="1" height="22.1" fill="#fbb07a"/>
<rect x="515" y="140.5" width="3" height="12.4" fill="#e46c28"/>
<rect x="516" y="139.1" width="1" height="15.2" fill="#fbb07a"/>
<rect x="518" y="140.5" width="3" height="3.1" fill="#e46c28"/>
<rect x="519" y="135.7" width="1" height="9.4" fill="#fbb07a"/>
<rect x="521" y="134.2" width="3" height="9.5" fill="#e46c28"/>
<rect x="522" y="130.6" width="1" height="14.5" fill="#fbb07a"/>
<rect x="524" y="134.2" width="3" height="4.7" fill="#e46c28"/>
<rect x="525" y="128.3" width="1" height="16.2" fill="#fbb07a"/>
<rect x="527" y="138.9" width="3" height="5.3" fill="#e46c28"/>
<rect x="528" y="137.1" width="1" height="10.7" fill="#fbb07a"/>
<rect x="529" y="135.7" width="3" height="8.5" fill="#e46c28"/>
<rect x="530" y="130.9" width="1" height="16.1" fill="#fbb07a"/>
<rect x="532" y="135.7" width="3" height="6.6" fill="#e46c28"/>
<rect x="533" y="132.4" width="1" height="13.1" fill="#fbb07a"/>
<rect x="535" y="142.2" width="3" height="2.9" fill="#e46c28"/>
<rect x="536" y="141.2" width="1" height="7.1" fill="#fbb07a"/>
<rect x="538" y="142.4" width="3" height="2.7" fill="#e46c28"/>
<rect x="539" y="140.8" width="1" height="8.9" fill="#fbb07a"/>
<rect x="541" y="136.8" width="3" height="5.6" fill="#e46c28"/>
<rect x="542" y="131.1" width="1" height="12.6" fill="#fbb07a"/>
<rect x="543" y="127.2" width="3" height="9.6" fill="#e46c28"/>
<rect x="544" y="125.5" width="1" height="16.5" fill="#fbb07a"/>
<rect x="546" y="124.9" width="3" height="2.3" fill="#e46c28"/>
<rect x="547" y="108.9" width="1" height="21.9" fill="#fbb07a"/>
<rect x="549" y="123.5" width="3" height="2.0" fill="#e46c28"/>
<rect x="550" y="118.6" width="1" height="12.2" fill="#fbb07a"/>
<rect x="552" y="114.7" width="3" height="8.8" fill="#e46c28"/>
<rect x="553" y="107.5" width="1" height="18.5" fill="#fbb07a"/>
<rect x="555" y="114.7" width="3" height="2.0" fill="#e46c28"/>
<rect x="556" y="109.7" width="1" height="10.9" fill="#fbb07a"/>
<rect x="557" y="115.0" width="3" height="4.5" fill="#e46c28"/>
<rect x="558" y="108.6" width="1" height="14.4" fill="#fbb07a"/>
<rect x="560" y="119.5" width="3" height="2.0" fill="#e46c28"/>
<rect x="561" y="115.9" width="1" height="7.5" fill="#fbb07a"/>
<rect x="563" y="109.9" width="3" height="10.1" fill="#e46c28"/>
<rect x="564" y="105.7" width="1" height="19.2" fill="#fbb07a"/>
<rect x="566" y="109.9" width="3" height="9.9" fill="#e46c28"/>
<rect x="567" y="106.4" width="1" height="15.8" fill="#fbb07a"/>
<rect x="569" y="119.1" width="3" height="2.0" fill="#e46c28"/>
<rect x="570" y="113.3" width="1" height="10.8" fill="#fbb07a"/>
<rect x="571" y="119.1" width="3" height="7.5" fill="#e46c28"/>
<rect x="572" y="115.7" width="1" height="14.8" fill="#fbb07a"/>
<rect x="574" y="126.6" width="3" height="2.0" fill="#e46c28"/>
<rect x="575" y="124.1" width="1" height="8.1" fill="#fbb07a"/>
<rect x="577" y="127.9" width="3" height="2.0" fill="#e46c28"/>
<rect x="578" y="125.0" width="1" height="9.7" fill="#fbb07a"/>
<rect x="580" y="128.1" width="3" height="2.0" fill="#e46c28"/>
<rect x="581" y="122.5" width="1" height="11.6" fill="#fbb07a"/>
<rect x="583" y="124.8" width="3" height="4.9" fill="#e46c28"/>
<rect x="584" y="123.6" width="1" height="7.9" fill="#fbb07a"/>
<rect x="585" y="124.8" width="3" height="9.7" fill="#e46c28"/>
<rect x="586" y="120.3" width="1" height="18.3" fill="#fbb07a"/>
<rect x="588" y="134.6" width="3" height="8.4" fill="#e46c28"/>
<rect x="589" y="130.2" width="1" height="17.3" fill="#fbb07a"/>
<rect x="591" y="143.0" width="3" height="6.9" fill="#e46c28"/>
<rect x="592" y="135.9" width="1" height="20.9" fill="#fbb07a"/>
<rect x="594" y="149.8" width="3" height="6.4" fill="#e46c28"/>
<rect x="595" y="145.2" width="1" height="15.4" fill="#fbb07a"/>
<rect x="597" y="148.4" width="3" height="7.8" fill="#e46c28"/>
<rect x="598" y="142.2" width="1" height="18.4" fill="#fbb07a"/>
<rect x="599" y="148.4" width="3" height="8.8" fill="#e46c28"/>
<rect x="600" y="145.8" width="1" height="13.6" fill="#fbb07a"/>
<rect x="602" y="156.7" width="3" height="2.0" fill="#e46c28"/>
<rect x="603" y="154.1" width="1" height="13.4" fill="#fbb07a"/>
<rect x="605" y="155.5" width="3" height="2.0" fill="#e46c28"/>
<rect x="606" y="152.0" width="1" height="11.9" fill="#fbb07a"/>
<rect x="608" y="155.5" width="3" height="10.7" fill="#e46c28"/>
<rect x="609" y="151.5" width="1" height="17.5" fill="#fbb07a"/>
<rect x="611" y="160.6" width="3" height="5.5" fill="#e46c28"/>
<rect x="612" y="159.2" width="1" height="9.8" fill="#fbb07a"/>
<rect x="613" y="152.8" width="3" height="7.9" fill="#e46c28"/>
<rect x="614" y="150.9" width="1" height="13.1" fill="#fbb07a"/>
<rect x="616" y="151.7" width="3" height="2.0" fill="#e46c28"/>
<rect x="617" y="148.5" width="1" height="6.6" fill="#fbb07a"/>
<rect x="619" y="151.7" width="3" height="5.1" fill="#e46c28"/>
<rect x="620" y="144.0" width="1" height="17.7" fill="#fbb07a"/>
<rect x="622" y="156.0" width="3" height="2.0" fill="#e46c28"/>
<rect x="623" y="143.0" width="1" height="16.5" fill="#fbb07a"/>
<rect x="625" y="156.0" width="3" height="2.0" fill="#e46c28"/>
<rect x="626" y="155.0" width="1" height="4.6" fill="#fbb07a"/>
<rect x="627" y="157.0" width="3" height="2.0" fill="#e46c28"/>
<rect x="628" y="153.0" width="1" height="10.5" fill="#fbb07a"/>
<rect x="630" y="157.5" width="3" height="2.0" fill="#e46c28"/>
<rect x="631" y="152.9" width="1" height="10.4" fill="#fbb07a"/>
<rect x="633" y="159.2" width="3" height="16.1" fill="#e46c28"/>
<rect x="634" y="155.7" width="1" height="23.8" fill="#fbb07a"/>
<rect x="636" y="175.4" width="3" height="2.0" fill="#e46c28"/>
<rect x="637" y="174.3" width="1" height="12.4" fill="#fbb07a"/>
<rect x="639" y="176.3" width="3" height="2.0" fill="#e46c28"/>
<rect x="640" y="173.5" width="1" height="9.7" fill="#fbb07a"/>
<rect x="641" y="176.4" width="3" height="2.0" fill="#e46c28"/>
<rect x="642" y="174.0" width="1" height="6.9" fill="#fbb07a"/>
<rect x="644" y="169.7" width="3" height="7.5" fill="#e46c28"/>
<rect x="645" y="165.2" width="1" height="14.9" fill="#fbb07a"/>
<rect x="647" y="167.7" width="3" height="2.0" fill="#e46c28"/>
<rect x="648" y="163.9" width="1" height="8.1" fill="#fbb07a"/>
<rect x="650" y="164.2" width="3" height="3.5" fill="#e46c28"/>
<rect x="651" y="160.2" width="1" height="9.4" fill="#fbb07a"/>
<rect x="653" y="164.2" width="3" height="2.0" fill="#e46c28"/>
<rect x="654" y="158.3" width="1" height="13.4" fill="#fbb07a"/>
<rect x="655" y="156.8" width="3" height="8.1" fill="#e46c28"/>
<rect x="656" y="150.5" width="1" height="16.4" fill="#fbb07a"/>
<rect x="658" y="156.8" width="3" height="3.0" fill="#e46c28"/>
<rect x="659" y="149.0" width="1" height="12.1" fill="#fbb07a"/>
<rect x="661" y="159.7" width="3" height="6.0" fill="#e46c28"/>
<rect x="662" y="155.5" width="1" height="17.1" fill="#fbb07a"/>
<rect x="664" y="165.8" width="3" height="2.0" fill="#e46c28"/>
<rect x="665" y="161.0" width="1" height="14.2" fill="#fbb07a"/>
<rect x="667" y="166.6" width="3" height="4.2" fill="#e46c28"/>
<rect x="668" y="164.6" width="1" height="7.7" fill="#fbb07a"/>
<rect x="669" y="160.3" width="3" height="10.5" fill="#e46c28"/>
<rect x="670" y="158.7" width="1" height="14.4" fill="#fbb07a"/>
<rect x="672" y="160.3" width="3" height="2.0" fill="#e46c28"/>
<rect x="673" y="158.8" width="1" height="5.2" fill="#fbb07a"/>
<rect x="675" y="154.1" width="3" height="7.3" fill="#e46c28"/>
<rect x="676" y="151.5" width="1" height="11.5" fill="#fbb07a"/>
<rect x="678" y="154.1" width="3" height="8.9" fill="#e46c28"/>
<rect x="679" y="152.8" width="1" height="11.6" fill="#fbb07a"/>
<rect x="681" y="156.5" width="3" height="6.5" fill="#e46c28"/>
<rect x="682" y="153.0" width="1" height="14.3" fill="#fbb07a"/>
<rect x="683" y="156.5" width="3" height="7.0" fill="#e46c28"/>
<rect x="684" y="147.6" width="1" height="18.8" fill="#fbb07a"/>
<rect x="686" y="157.4" width="3" height="6.1" fill="#e46c28"/>
<rect x="687" y="155.4" width="1" height="11.9" fill="#fbb07a"/>
<rect x="689" y="157.2" width="3" height="2.0" fill="#e46c28"/>
<rect x="690" y="154.0" width="1" height="6.6" fill="#fbb07a"/>
<rect x="692" y="150.0" width="3" height="7.2" fill="#e46c28"/>
<rect x="693" y="146.7" width="1" height="13.4" fill="#fbb07a"/>
<rect x="695" y="141.6" width="3" height="8.4" fill="#e46c28"/>
<rect x="696" y="137.7" width="1" height="13.6" fill="#fbb07a"/>
<rect x="697" y="141.6" width="3" height="2.0" fill="#e46c28"/>
<rect x="698" y="134.8" width="1" height="10.1" fill="#fbb07a"/>
<rect x="700" y="143.5" width="3" height="6.7" fill="#e46c28"/>
<rect x="701" y="137.3" width="1" height="19.3" fill="#fbb07a"/>
<rect x="703" y="145.5" width="3" height="4.7" fill="#e46c28"/>
<rect x="704" y="143.4" width="1" height="11.0" fill="#fbb07a"/>
<rect x="706" y="145.5" width="3" height="5.9" fill="#e46c28"/>
<rect x="707" y="134.6" width="1" height="20.5" fill="#fbb07a"/>
<rect x="709" y="151.4" width="3" height="22.9" fill="#e46c28"/>
<rect x="710" y="150.1" width="1" height="26.9" fill="#fbb07a"/>
<rect x="711" y="174.3" width="3" height="11.5" fill="#e46c28"/>
<rect x="712" y="171.2" width="1" height="22.7" fill="#fbb07a"/>
<rect x="714" y="185.8" width="3" height="15.5" fill="#e46c28"/>
<rect x="715" y="178.0" width="1" height="29.0" fill="#fbb07a"/>
<rect x="717" y="201.3" width="3" height="13.2" fill="#e46c28"/>
<rect x="718" y="193.3" width="1" height="41.5" fill="#fbb07a"/>
<rect x="720" y="214.5" width="3" height="13.9" fill="#e46c28"/>
<rect x="721" y="211.2" width="1" height="20.6" fill="#fbb07a"/>
<rect x="723" y="221.6" width="3" height="6.8" fill="#e46c28"/>
<rect x="724" y="218.5" width="1" height="16.6" fill="#fbb07a"/>
<rect x="725" y="217.2" width="3" height="4.4" fill="#e46c28"/>
<rect x="726" y="216.0" width="1" height="13.5" fill="#fbb07a"/>
<rect x="728" y="205.9" width="3" height="11.4" fill="#e46c28"/>
<rect x="729" y="204.7" width="1" height="19.3" fill="#fbb07a"/>
<rect x="731" y="205.9" width="3" height="2.0" fill="#e46c28"/>
<rect x="732" y="200.9" width="1" height="11.2" fill="#fbb07a"/>
<rect x="734" y="207.9" width="3" height="2.0" fill="#e46c28"/>
<rect x="735" y="204.1" width="1" height="21.9" fill="#fbb07a"/>
<rect x="737" y="203.8" width="3" height="4.1" fill="#e46c28"/>
<rect x="738" y="201.3" width="1" height="9.9" fill="#fbb07a"/>
<rect x="739" y="196.5" width="3" height="7.3" fill="#e46c28"/>
<rect x="740" y="194.4" width="1" height="14.1" fill="#fbb07a"/>
<rect x="742" y="196.5" width="3" height="10.8" fill="#e46c28"/>
<rect x="743" y="194.0" width="1" height="14.3" fill="#fbb07a"/>
<rect x="745" y="203.0" width="3" height="4.2" fill="#e46c28"/>
<rect x="746" y="201.5" width="1" height="7.1" fill="#fbb07a"/>
<rect x="748" y="203.0" width="3" height="5.8" fill="#e46c28"/>
<rect x="749" y="200.8" width="1" height="12.8" fill="#fbb07a"/>
<rect x="751" y="208.8" width="3" height="2.8" fill="#e46c28"/>
<rect x="752" y="207.7" width="1" height="7.3" fill="#fbb07a"/>
<rect x="753" y="204.8" width="3" height="6.9" fill="#e46c28"/>
<rect x="754" y="198.4" width="1" height="14.5" fill="#fbb07a"/>
<rect x="756" y="202.3" width="3" height="2.5" fill="#e46c28"/>
<rect x="757" y="198.2" width="1" height="10.3" fill="#fbb07a"/>
<rect x="759" y="202.3" width="3" height="7.4" fill="#e46c28"/>
<rect x="760" y="199.2" width="1" height="15.4" fill="#fbb07a"/>
<rect x="762" y="193.4" width="3" height="16.3" fill="#e46c28"/>
<rect x="763" y="192.3" width="1" height="19.7" fill="#fbb07a"/>
<rect x="765" y="192.4" width="3" height="2.0" fill="#e46c28"/>
<rect x="766" y="185.7" width="1" height="13.8" fill="#fbb07a"/>
<rect x="767" y="191.4" width="3" height="2.0" fill="#e46c28"/>
<rect x="768" y="182.4" width="1" height="14.2" fill="#fbb07a"/>
<rect x="770" y="191.4" width="3" height="2.0" fill="#e46c28"/>
<rect x="771" y="189.3" width="1" height="9.7" fill="#fbb07a"/>
<rect x="773" y="192.7" width="3" height="6.5" fill="#e46c28"/>
<rect x="774" y="190.1" width="1" height="10.8" fill="#fbb07a"/>
<rect x="776" y="195.4" width="3" height="3.8" fill="#e46c28"/>
<rect x="777" y="190.5" width="1" height="12.0" fill="#fbb07a"/>
<rect x="779" y="195.4" width="3" height="8.0" fill="#e46c28"/>
<rect x="780" y="192.3" width="1" height="17.9" fill="#fbb07a"/>
<rect x="781" y="203.4" width="3" height="15.9" fill="#e46c28"/>
<rect x="782" y="199.4" width="1" height="23.7" fill="#fbb07a"/>
<rect x="784" y="215.2" width="3" height="4.1" fill="#e46c28"/>
<rect x="785" y="212.8" width="1" height="10.0" fill="#fbb07a"/>
<rect x="787" y="215.2" width="3" height="12.5" fill="#e46c28"/>
<rect x="788" y="209.9" width="1" height="20.3" fill="#fbb07a"/>
<rect x="790" y="227.7" width="3" height="3.2" fill="#e46c28"/>
<rect x="791" y="225.4" width="1" height="8.9" fill="#fbb07a"/>
<rect x="793" y="224.5" width="3" height="6.4" fill="#e46c28"/>
<rect x="794" y="217.8" width="1" height="17.3" fill="#fbb07a"/>
<rect x="795" y="224.5" width="3" height="7.9" fill="#e46c28"/>
<rect x="796" y="222.5" width="1" height="30.3" fill="#fbb07a"/>
<rect x="798" y="232.4" width="3" height="3.6" fill="#e46c28"/>
<rect x="799" y="227.1" width="1" height="13.7" fill="#fbb07a"/>
<rect x="801" y="236.1" width="3" height="2.0" fill="#e46c28"/>
<rect x="802" y="230.5" width="1" height="20.4" fill="#fbb07a"/>
<rect x="804" y="237.3" width="3" height="6.2" fill="#e46c28"/>
<rect x="805" y="235.7" width="1" height="13.2" fill="#fbb07a"/>
<rect x="807" y="237.2" width="3" height="6.3" fill="#e46c28"/>
<rect x="808" y="235.7" width="1" height="10.4" fill="#fbb07a"/>
<rect x="809" y="233.8" width="3" height="3.4" fill="#e46c28"/>
<rect x="810" y="226.0" width="1" height="14.0" fill="#fbb07a"/>
<rect x="812" y="233.8" width="3" height="6.7" fill="#e46c28"/>
<rect x="813" y="230.2" width="1" height="13.9" fill="#fbb07a"/>
<rect x="815" y="236.2" width="3" height="4.4" fill="#e46c28"/>
<rect x="816" y="234.0" width="1" height="25.0" fill="#fbb07a"/>
<rect x="818" y="232.9" width="3" height="3.3" fill="#e46c28"/>
<rect x="819" y="224.9" width="1" height="14.1" fill="#fbb07a"/>
<rect x="821" y="223.0" width="3" height="9.9" fill="#e46c28"/>
<rect x="822" y="207.0" width="1" height="31.9" fill="#fbb07a"/>
<rect x="823" y="219.6" width="3" height="3.4" fill="#e46c28"/>
<rect x="824" y="217.7" width="1" height="9.6" fill="#fbb07a"/>
<rect x="826" y="219.6" width="3" height="2.0" fill="#e46c28"/>
<rect x="827" y="218.0" width="1" height="5.2" fill="#fbb07a"/>
<rect x="829" y="219.7" width="3" height="14.9" fill="#e46c28"/>
<rect x="830" y="212.9" width="1" height="37.1" fill="#fbb07a"/>
<rect x="832" y="234.6" width="3" height="2.0" fill="#e46c28"/>
<rect x="833" y="231.1" width="1" height="7.6" fill="#fbb07a"/>
<rect x="835" y="224.2" width="3" height="11.4" fill="#e46c28"/>
<rect x="836" y="220.2" width="1" height="20.1" fill="#fbb07a"/>
<rect x="837" y="220.2" width="3" height="4.1" fill="#e46c28"/>
<rect x="838" y="206.4" width="1" height="21.4" fill="#fbb07a"/>
<rect x="840" y="212.3" width="3" height="7.9" fill="#e46c28"/>
<rect x="841" y="209.4" width="1" height="14.1" fill="#fbb07a"/>
<rect x="843" y="210.0" width="3" height="2.4" fill="#e46c28"/>
<rect x="844" y="203.3" width="1" height="16.5" fill="#fbb07a"/>
<rect x="846" y="198.4" width="3" height="11.5" fill="#e46c28"/>
<rect x="847" y="195.2" width="1" height="15.8" fill="#fbb07a"/>
<rect x="849" y="198.4" width="3" height="7.7" fill="#e46c28"/>
<rect x="850" y="191.6" width="1" height="15.8" fill="#fbb07a"/>
<rect x="851" y="206.2" width="3" height="4.6" fill="#e46c28"/>
<rect x="852" y="203.7" width="1" height="9.5" fill="#fbb07a"/>
<rect x="854" y="207.8" width="3" height="3.0" fill="#e46c28"/>
<rect x="855" y="204.0" width="1" height="9.5" fill="#fbb07a"/>
<rect x="857" y="207.3" width="3" height="2.0" fill="#e46c28"/>
<rect x="858" y="202.7" width="1" height="16.0" fill="#fbb07a"/>
<rect x="860" y="206.3" width="3" height="2.0" fill="#e46c28"/>
<rect x="861" y="205.0" width="1" height="8.9" fill="#fbb07a"/>
<path d="M18.0,122.8 C19.7,122.2 23.5,120.8 28.0,119.5 C32.5,118.2 40.0,115.9 45.0,115.0 C50.0,114.1 53.3,114.8 58.0,114.0 C62.7,113.2 67.9,109.3 73.0,110.0 C78.1,110.7 83.7,116.7 88.4,118.4 C93.1,120.1 96.1,119.5 101.4,120.0 C106.7,120.5 114.3,122.0 120.0,121.7 C125.7,121.4 130.2,118.9 135.4,117.9 C140.6,116.9 145.8,116.4 150.9,115.6 C156.1,114.8 161.2,114.0 166.3,113.2 C171.4,112.4 177.3,111.6 181.7,111.0 C186.1,110.4 188.6,109.4 192.5,109.4 C196.4,109.4 198.7,110.9 204.9,111.0 C211.2,111.1 220.8,110.5 230.0,110.2 C239.2,109.9 252.2,108.2 260.2,109.3 C268.2,110.4 271.0,113.0 277.8,116.7 C284.6,120.4 294.4,126.7 301.2,131.3 C308.0,135.9 313.4,140.1 318.8,144.5 C324.2,148.9 329.1,153.1 333.5,157.7 C337.9,162.3 340.5,168.2 345.4,172.1 C350.3,175.9 356.6,179.5 362.7,180.8 C368.8,182.1 376.6,180.7 382.0,180.1 C387.4,179.5 391.2,178.4 395.0,177.5 C398.8,176.6 400.8,175.9 405.0,174.8 C409.2,173.7 415.2,172.2 420.4,171.0 C425.5,169.8 430.8,169.2 435.9,167.9 C441.0,166.6 446.2,164.6 451.3,163.3 C456.4,162.0 461.1,160.8 466.7,160.2 C472.3,159.5 481.1,159.7 485.2,159.4 C489.3,159.1 486.8,158.4 491.4,158.3 C496.0,158.2 507.3,159.0 513.0,158.6 C518.7,158.2 520.8,156.7 525.4,156.0 C530.0,155.3 535.8,155.8 540.9,154.4 C546.0,153.0 551.2,149.4 556.3,147.5 C561.4,145.6 567.1,144.0 571.7,142.8 C576.3,141.6 579.9,140.6 584.0,140.5 C588.1,140.4 592.0,141.0 596.4,142.0 C600.8,143.0 606.4,145.7 610.3,146.7 C614.2,147.7 616.1,147.5 620.0,148.2 C623.9,148.8 628.2,149.6 633.5,150.6 C638.8,151.6 645.8,153.2 652.0,154.3 C658.2,155.4 664.4,156.4 670.6,157.0 C676.8,157.6 683.8,158.0 689.0,158.0 C694.2,158.0 698.3,157.2 702.0,157.0 C705.7,156.8 707.5,155.4 711.3,157.0 C715.1,158.6 720.5,163.8 725.0,166.3 C729.5,168.8 733.2,169.7 738.5,172.2 C743.8,174.7 750.8,179.2 757.0,181.5 C763.2,183.8 770.0,184.3 775.6,186.0 C781.2,187.7 784.9,189.0 790.4,191.7 C795.9,194.3 804.0,199.8 808.9,201.9 C813.8,204.1 816.3,203.8 819.8,204.6 C823.2,205.4 826.2,206.3 829.6,207.0 C833.0,207.7 834.4,208.2 840.0,208.6 C845.6,209.0 859.2,209.1 863.0,209.2" fill="none" stroke="#b42a2a" stroke-width="1.15"/>
<path d="M18.0,130.0 C18.9,128.4 19.1,123.9 23.6,120.6 C28.1,117.3 39.9,111.3 45.0,110.0 C50.1,108.7 51.3,112.5 54.0,113.0 C56.7,113.5 58.4,115.0 61.4,113.0 C64.4,111.0 69.1,100.5 72.2,100.7 C75.3,100.9 77.3,110.3 80.0,114.0 C82.7,117.7 85.6,120.8 88.4,122.8 C91.2,124.8 93.4,125.3 97.0,126.0 C100.6,126.7 105.3,127.5 110.0,127.0 C114.7,126.5 120.8,124.5 125.0,122.8 C129.2,121.1 131.3,119.0 135.4,117.0 C139.5,115.0 144.4,112.7 149.3,111.0 C154.2,109.3 160.4,107.9 164.8,107.0 C169.2,106.1 171.6,106.0 175.5,105.5 C179.4,105.0 185.2,104.1 188.0,103.7 C190.8,103.3 191.0,102.9 192.5,103.2 C194.0,103.5 194.7,104.3 197.0,105.5 C199.3,106.7 203.3,109.6 206.4,110.2 C209.5,110.8 211.8,109.1 215.7,109.0 C219.6,108.9 225.5,109.6 230.0,109.4 C234.5,109.2 238.0,107.9 242.6,107.9 C247.2,107.9 252.9,107.6 257.3,109.3 C261.7,111.0 264.6,114.5 269.0,118.0 C273.4,121.5 278.3,124.8 283.7,130.0 C289.1,135.2 296.3,142.8 301.2,149.0 C306.1,155.2 308.9,161.5 313.0,167.0 C317.1,172.5 321.7,176.6 326.0,181.9 C330.3,187.2 335.5,194.3 338.9,199.0 C342.3,203.7 342.9,207.6 346.5,210.0 C350.1,212.4 356.7,213.4 360.5,213.2 C364.3,213.0 365.6,212.0 369.2,208.9 C372.8,205.8 377.7,199.0 382.0,194.8 C386.3,190.7 390.7,187.2 395.0,184.0 C399.3,180.8 403.5,178.3 408.0,175.4 C412.5,172.5 418.1,167.9 422.0,166.4 C425.9,164.9 427.6,167.4 431.2,166.4 C434.8,165.4 439.2,162.3 443.6,160.2 C448.0,158.1 452.6,155.2 457.5,154.0 C462.4,152.8 466.7,153.3 472.9,153.2 C479.1,153.1 490.1,152.6 494.5,153.2 C498.9,153.8 496.7,156.4 499.0,157.0 C501.3,157.6 505.7,157.5 508.4,157.0 C511.1,156.5 512.7,155.1 515.0,154.0 C517.3,152.9 518.2,151.4 522.3,150.6 C526.3,149.8 533.6,151.1 539.3,149.0 C545.0,146.9 550.9,141.3 556.3,138.2 C561.7,135.1 567.3,131.9 571.7,130.5 C576.1,129.1 578.4,128.4 582.5,129.7 C586.6,131.0 592.0,135.4 596.4,138.2 C600.8,141.0 603.9,144.5 608.8,146.7 C613.7,148.9 621.3,149.5 626.0,151.5 C630.7,153.5 633.5,157.1 637.2,158.9 C640.9,160.8 643.0,161.7 648.3,162.6 C653.5,163.5 661.9,164.2 668.7,164.4 C675.5,164.6 684.1,164.4 689.0,163.5 C693.9,162.6 694.6,159.8 698.3,158.9 C702.0,158.0 707.9,156.2 711.3,158.0 C714.7,159.8 715.4,165.2 718.7,170.0 C722.0,174.8 727.1,183.2 731.0,187.0 C734.9,190.8 737.7,190.4 742.0,192.6 C746.3,194.8 751.7,198.9 757.0,200.0 C762.3,201.1 769.4,198.7 773.7,199.0 C778.0,199.3 779.6,199.9 783.0,201.9 C786.4,203.9 790.0,207.9 794.0,211.0 C798.0,214.1 803.3,218.1 807.0,220.4 C810.7,222.7 813.0,224.6 816.0,225.0 C819.0,225.4 821.8,223.1 824.7,223.1 C827.6,223.1 830.4,225.2 833.3,225.0 C836.2,224.8 839.3,223.1 842.0,221.9 C844.7,220.8 846.1,219.4 849.4,218.1 C852.7,216.8 859.7,214.5 861.7,213.8" fill="none" stroke="#1414d8" stroke-width="1.1"/>
<path d="M18,208.5 H901" stroke="#e8e8e8" stroke-width="1"/>
</g>
<g clip-path="url(#cmacd)">
<path d="M24.2,292.5 V293.4 M26.2,292.5 V293.9 M29.2,292.5 V293.4 M46.2,292.5 V291.6 M49.2,292.5 V291.4 M57.2,292.5 V293.7 M60.2,292.5 V294.5 M63.2,292.5 V294.0 M71.2,292.5 V290.7 M74.2,292.5 V290.3 M77.2,292.5 V290.5 M82.2,292.5 V297.8 M85.2,292.5 V302.3 M88.2,292.5 V303.0 M91.2,292.5 V301.0 M94.2,292.5 V298.9 M96.2,292.5 V296.9 M99.2,292.5 V295.6 M102.2,292.5 V294.9 M105.2,292.5 V294.1 M108.2,292.5 V293.3 M127.2,292.5 V291.5 M130.2,292.5 V290.9 M133.2,292.5 V290.3 M136.2,292.5 V290.1 M138.2,292.5 V290.0 M141.2,292.5 V289.9 M144.2,292.5 V289.7 M147.2,292.5 V289.6 M150.2,292.5 V290.2 M152.2,292.5 V290.7 M155.2,292.5 V291.2 M169.2,292.5 V293.5 M172.2,292.5 V293.8 M175.2,292.5 V293.7 M178.2,292.5 V293.6 M180.2,292.5 V293.6 M183.2,292.5 V293.5 M186.2,292.5 V293.4 M197.2,292.5 V294.1 M200.2,292.5 V295.2 M203.2,292.5 V296.3 M206.2,292.5 V297.8 M208.2,292.5 V297.0 M211.2,292.5 V295.8 M214.2,292.5 V294.6 M217.2,292.5 V293.8 M220.2,292.5 V293.4 M250.2,292.5 V293.3 M253.2,292.5 V293.4 M256.2,292.5 V293.5 M259.2,292.5 V293.6 M262.2,292.5 V293.5 M264.2,292.5 V295.0 M267.2,292.5 V296.5 M270.2,292.5 V297.0 M273.2,292.5 V296.9 M276.2,292.5 V296.8 M278.2,292.5 V296.9 M281.2,292.5 V297.3 M284.2,292.5 V297.6 M287.2,292.5 V297.9 M290.2,292.5 V298.4 M292.2,292.5 V298.9 M295.2,292.5 V299.3 M298.2,292.5 V299.8 M301.2,292.5 V300.2 M304.2,292.5 V300.3 M306.2,292.5 V299.5 M309.2,292.5 V298.8 M312.2,292.5 V298.1 M315.2,292.5 V297.4 M318.2,292.5 V296.8 M320.2,292.5 V296.2 M323.2,292.5 V295.6 M326.2,292.5 V295.1 M329.2,292.5 V294.9 M332.2,292.5 V294.8 M334.2,292.5 V294.8 M337.2,292.5 V294.7 M340.2,292.5 V294.8 M343.2,292.5 V294.9 M346.2,292.5 V293.8 M348.2,292.5 V291.7 M351.2,292.5 V290.0 M354.2,292.5 V288.3 M357.2,292.5 V288.1 M360.2,292.5 V288.2 M362.2,292.5 V288.3 M365.2,292.5 V287.4 M368.2,292.5 V285.8 M371.2,292.5 V285.2 M374.2,292.5 V284.6 M376.2,292.5 V284.0 M379.2,292.5 V283.4 M382.2,292.5 V283.0 M385.2,292.5 V282.6 M388.2,292.5 V282.3 M390.2,292.5 V283.1 M393.2,292.5 V284.4 M396.2,292.5 V285.7 M399.2,292.5 V286.7 M402.2,292.5 V287.0 M404.2,292.5 V288.3 M407.2,292.5 V289.8 M410.2,292.5 V290.6 M413.2,292.5 V291.3 M424.2,292.5 V293.6 M427.2,292.5 V294.4 M430.2,292.5 V295.2 M432.2,292.5 V295.3 M435.2,292.5 V295.0 M438.2,292.5 V294.7 M441.2,292.5 V294.3 M444.2,292.5 V293.4 M449.2,292.5 V291.6 M452.2,292.5 V291.5 M455.2,292.5 V291.7 M469.2,292.5 V293.5 M472.2,292.5 V294.3 M474.2,292.5 V295.0 M477.2,292.5 V295.7 M480.2,292.5 V295.5 M483.2,292.5 V295.5 M486.2,292.5 V295.4 M488.2,292.5 V295.3 M491.2,292.5 V295.3 M494.2,292.5 V295.6 M497.2,292.5 V296.1 M500.2,292.5 V296.6 M502.2,292.5 V297.1 M505.2,292.5 V296.0 M508.2,292.5 V295.1 M511.2,292.5 V294.3 M514.2,292.5 V293.9 M516.2,292.5 V293.6 M542.2,292.5 V291.6 M544.2,292.5 V291.4 M547.2,292.5 V291.2 M550.2,292.5 V290.9 M553.2,292.5 V290.7 M556.2,292.5 V290.5 M558.2,292.5 V290.3 M561.2,292.5 V290.4 M564.2,292.5 V290.7 M567.2,292.5 V291.0 M570.2,292.5 V291.2 M572.2,292.5 V291.4 M575.2,292.5 V291.2 M586.2,292.5 V294.5 M589.2,292.5 V295.7 M592.2,292.5 V296.9 M595.2,292.5 V297.7 M598.2,292.5 V298.6 M600.2,292.5 V299.4 M603.2,292.5 V300.1 M606.2,292.5 V299.8 M609.2,292.5 V299.8 M612.2,292.5 V298.1 M614.2,292.5 V296.4 M617.2,292.5 V295.0 M620.2,292.5 V294.4 M623.2,292.5 V293.9 M626.2,292.5 V293.4 M628.2,292.5 V294.0 M631.2,292.5 V294.6 M634.2,292.5 V295.3 M637.2,292.5 V295.8 M640.2,292.5 V295.5 M642.2,292.5 V295.1 M645.2,292.5 V294.8 M648.2,292.5 V294.8 M651.2,292.5 V294.3 M654.2,292.5 V293.8 M668.2,292.5 V291.2 M670.2,292.5 V290.7 M673.2,292.5 V290.9 M676.2,292.5 V291.1 M679.2,292.5 V291.3 M682.2,292.5 V291.4 M684.2,292.5 V290.9 M687.2,292.5 V290.4 M690.2,292.5 V290.0 M693.2,292.5 V289.5 M696.2,292.5 V289.4 M698.2,292.5 V289.3 M701.2,292.5 V290.4 M704.2,292.5 V291.3 M710.2,292.5 V293.8 M712.2,292.5 V295.8 M715.2,292.5 V298.8 M718.2,292.5 V302.2 M721.2,292.5 V304.0 M724.2,292.5 V303.8 M726.2,292.5 V303.7 M729.2,292.5 V302.8 M732.2,292.5 V301.3 M735.2,292.5 V298.7 M738.2,292.5 V296.8 M740.2,292.5 V295.0 M743.2,292.5 V293.5 M752.2,292.5 V293.3 M757.2,292.5 V291.4 M760.2,292.5 V290.6 M763.2,292.5 V290.0 M766.2,292.5 V289.5 M768.2,292.5 V290.5 M771.2,292.5 V290.8 M774.2,292.5 V290.8 M777.2,292.5 V290.8 M780.2,292.5 V291.6 M791.2,292.5 V293.6 M794.2,292.5 V294.5 M796.2,292.5 V295.1 M799.2,292.5 V295.6 M802.2,292.5 V296.2 M805.2,292.5 V295.9 M808.2,292.5 V294.5 M810.2,292.5 V294.0 M813.2,292.5 V293.5 M822.2,292.5 V291.3 M824.2,292.5 V290.9 M827.2,292.5 V290.6 M830.2,292.5 V290.8 M833.2,292.5 V290.9 M836.2,292.5 V291.4 M841.2,292.5 V291.5 M844.2,292.5 V290.8 M847.2,292.5 V290.0 M850.2,292.5 V289.6 M852.2,292.5 V289.5 M855.2,292.5 V289.5 M858.2,292.5 V289.2 M861.2,292.5 V290.1" stroke="#c42222" stroke-width="1.6"/>
<path d="M18.0,296.0 C20.8,295.2 29.8,293.7 35.0,291.5 C40.2,289.3 45.1,283.0 49.4,282.6 C53.7,282.2 57.0,289.5 60.8,289.3 C64.6,289.1 69.4,282.3 72.3,281.7 C75.2,281.1 75.6,281.9 78.0,285.5 C80.4,289.1 83.4,300.9 86.6,303.3 C89.8,305.7 93.0,300.5 97.0,299.8 C101.0,299.1 106.3,299.5 110.5,298.9 C114.7,298.3 118.2,297.4 122.0,296.0 C125.8,294.6 129.3,292.1 133.4,290.3 C137.5,288.5 142.4,285.6 146.8,285.0 C151.2,284.4 155.0,286.1 160.0,286.5 C165.0,286.9 171.2,287.0 177.0,287.4 C182.8,287.8 189.7,287.4 194.5,288.8 C199.3,290.2 202.2,295.3 206.0,296.0 C209.8,296.7 213.4,293.7 217.4,293.1 C221.4,292.5 222.8,292.2 230.0,292.2 C237.2,292.2 254.2,292.1 260.6,293.2 C267.0,294.3 265.4,297.5 268.2,298.9 C271.0,300.3 274.5,300.5 277.7,301.8 C280.9,303.1 284.4,305.0 287.3,306.6 C290.2,308.2 292.4,309.7 295.0,311.3 C297.6,312.9 299.4,315.0 302.6,316.1 C305.8,317.2 309.6,317.6 314.0,318.0 C318.4,318.4 324.2,318.1 329.3,318.4 C334.4,318.6 340.5,320.7 344.6,319.5 C348.7,318.3 350.9,313.3 354.1,311.3 C357.3,309.3 359.6,310.5 363.7,307.5 C367.8,304.5 374.9,297.2 379.0,293.2 C383.1,289.2 384.7,285.9 388.5,283.6 C392.3,281.3 396.5,280.0 401.9,279.4 C407.3,278.8 416.2,279.5 421.0,280.2 C425.8,280.9 427.3,282.7 430.5,283.3 C433.7,283.9 436.8,284.3 440.0,284.0 C443.2,283.7 445.8,281.9 450.0,281.7 C454.2,281.5 460.9,281.7 465.3,282.7 C469.8,283.7 472.2,286.4 476.7,287.5 C481.1,288.6 487.5,288.2 492.0,289.4 C496.5,290.6 500.3,294.2 503.5,294.7 C506.7,295.2 507.3,293.1 511.1,292.2 C514.9,291.3 520.7,290.3 526.4,289.4 C532.1,288.4 540.1,287.6 545.5,286.5 C550.9,285.4 554.1,283.5 558.9,282.7 C563.7,281.9 570.0,281.3 574.1,281.7 C578.2,282.1 580.8,283.6 583.7,285.2 C586.6,286.8 588.1,289.0 591.3,291.3 C594.5,293.6 599.9,297.3 602.8,298.9 C605.7,300.5 606.3,300.8 608.5,300.8 C610.7,300.8 613.3,299.3 616.2,298.9 C619.1,298.5 622.2,298.0 625.7,298.5 C629.2,299.0 633.4,301.2 637.2,301.8 C641.0,302.4 644.8,302.1 648.6,301.8 C652.4,301.5 656.4,300.7 660.0,299.9 C663.6,299.1 666.4,297.8 670.0,297.0 C673.6,296.2 676.7,296.3 681.5,295.1 C686.3,293.9 694.1,290.6 698.6,289.8 C703.1,289.0 705.7,289.4 708.2,290.3 C710.8,291.2 712.0,292.7 713.9,295.1 C715.8,297.5 717.5,302.2 719.7,304.6 C721.9,307.0 725.1,308.4 727.3,309.4 C729.5,310.4 730.5,310.9 733.0,310.4 C735.5,309.9 739.1,307.2 742.6,306.6 C746.1,306.0 750.2,307.7 754.0,306.6 C757.8,305.5 761.7,301.2 765.5,299.9 C769.3,298.5 773.2,298.4 777.0,298.5 C780.8,298.6 783.9,299.1 788.4,300.4 C792.9,301.7 799.2,305.6 803.7,306.2 C808.2,306.8 811.4,304.8 815.2,303.7 C819.0,302.6 822.8,300.8 826.6,299.9 C830.4,298.9 834.6,299.3 838.1,298.0 C841.6,296.7 844.1,293.8 847.6,292.2 C851.1,290.6 856.6,288.9 859.1,288.4 C861.6,287.9 862.3,289.2 862.9,289.4" fill="none" stroke="#10106a" stroke-width="1.1"/>
<path d="M18.0,296.0 C19.4,295.4 23.7,293.4 26.5,292.6 C29.3,291.9 31.2,293.0 35.0,291.5 C38.8,290.0 45.1,284.3 49.4,283.6 C53.7,282.9 57.0,287.4 60.8,287.4 C64.6,287.4 69.1,283.4 72.3,283.6 C75.5,283.8 77.5,286.7 80.0,288.4 C82.5,290.1 84.4,292.6 87.6,294.0 C90.8,295.4 95.2,296.2 99.0,297.0 C102.8,297.8 106.7,299.1 110.5,298.9 C114.3,298.7 118.2,297.1 122.0,296.0 C125.8,294.9 129.3,293.6 133.4,292.2 C137.5,290.8 142.4,288.3 146.8,287.4 C151.2,286.5 155.9,287.0 160.0,286.8 C164.1,286.6 168.1,286.0 171.6,286.0 C175.1,286.0 177.2,286.4 181.0,286.8 C184.8,287.2 190.7,287.7 194.5,288.4 C198.3,289.1 200.8,290.6 204.0,291.2 C207.2,291.8 209.3,292.0 213.6,292.2 C217.9,292.4 222.5,292.2 230.0,292.2 C237.5,292.2 252.2,291.7 258.6,292.2 C265.0,292.7 264.7,294.0 268.2,295.1 C271.7,296.2 275.9,297.5 279.7,298.9 C283.5,300.3 287.3,301.9 291.1,303.7 C294.9,305.4 298.8,307.7 302.6,309.4 C306.4,311.1 310.2,312.7 314.0,313.8 C317.8,314.9 321.7,315.6 325.5,316.1 C329.3,316.7 333.5,316.9 337.0,317.1 C340.5,317.4 343.3,318.1 346.5,317.6 C349.7,317.1 352.5,315.6 356.0,314.2 C359.5,312.8 363.7,311.6 367.5,309.4 C371.3,307.2 375.5,303.7 379.0,300.8 C382.5,297.9 385.3,294.8 388.5,292.2 C391.7,289.6 394.8,287.2 398.0,285.5 C401.2,283.8 404.1,282.6 407.6,281.7 C411.1,280.8 415.2,279.9 419.0,279.8 C422.8,279.7 427.0,280.4 430.5,280.8 C434.0,281.2 436.8,282.0 440.0,282.3 C443.2,282.6 445.8,282.6 450.0,282.7 C454.2,282.8 460.5,282.3 465.3,282.7 C470.1,283.1 474.2,284.5 478.6,285.2 C483.1,285.9 487.5,286.1 492.0,287.1 C496.5,288.1 501.3,290.8 505.4,291.3 C509.5,291.8 512.7,290.7 516.8,290.3 C520.9,289.9 525.4,289.5 530.2,289.0 C535.0,288.5 540.7,288.2 545.5,287.5 C550.3,286.8 554.4,285.4 558.9,284.6 C563.4,283.8 568.1,282.7 572.2,282.7 C576.3,282.7 579.9,283.5 583.7,284.6 C587.5,285.7 591.3,287.8 595.1,289.4 C598.9,291.0 602.8,292.8 606.6,294.1 C610.4,295.4 613.5,296.3 618.0,297.0 C622.5,297.7 628.8,298.0 633.3,298.5 C637.8,299.0 641.0,299.7 644.8,299.9 C648.6,300.1 652.1,300.1 656.3,299.9 C660.5,299.7 665.8,299.1 670.0,298.5 C674.2,297.9 677.7,296.7 681.5,296.0 C685.3,295.3 689.4,294.9 692.9,294.1 C696.4,293.3 699.6,291.9 702.5,291.3 C705.4,290.7 707.9,290.2 710.1,290.3 C712.3,290.4 713.2,290.8 715.8,292.2 C718.3,293.6 722.2,296.8 725.4,298.9 C728.6,301.0 731.4,303.4 734.9,304.6 C738.4,305.8 742.6,306.0 746.4,306.2 C750.2,306.4 754.1,306.5 757.9,305.6 C761.7,304.7 765.2,301.9 769.3,300.8 C773.4,299.8 778.6,299.3 782.7,299.3 C786.8,299.3 790.0,300.1 794.1,300.8 C798.2,301.5 803.0,303.4 807.5,303.7 C812.0,304.0 816.4,303.3 820.9,302.7 C825.4,302.1 830.1,301.2 834.2,299.9 C838.3,298.6 842.2,296.4 845.7,295.1 C849.2,293.8 852.4,293.0 855.3,292.2 C858.2,291.4 861.6,290.6 862.9,290.3" fill="none" stroke="#f01818" stroke-width="3" stroke-linecap="round" stroke-dasharray="0.01,2.9"/>
</g>
<rect x="18" y="279" width="30" height="11" fill="#3c424b"/>
<text x="19.3" y="289" font-size="11" fill="#1c1c70" textLength="28" lengthAdjust="spacingAndGlyphs">MACD</text>
<g clip-path="url(#crsi)">
<path d="M18,331.5 H862 M18,387 H862" stroke="#1a1aa8" stroke-width="2"/>
<path d="M18.0,352.0 L20.7,352.8 L23.6,341.4 L34.0,334.7 L39.8,346.0 L44.6,344.2 L47.5,362.4 L53.2,367.2 L60.8,358.6 L64.7,337.5 L67.5,342.3 L72.3,338.5 L76.1,370.0 L82.8,381.5 L87.6,377.7 L94.3,359.5 L99.0,363.3 L108.6,366.2 L114.3,356.6 L124.8,350.0 L135.3,350.9 L140.0,346.1 L144.9,342.3 L148.7,357.6 L156.3,356.6 L162.0,343.3 L167.8,357.6 L170.7,350.9 L177.3,356.6 L183.0,353.8 L192.6,352.8 L198.3,372.9 L202.2,368.1 L206.0,372.9 L215.5,352.8 L223.0,359.5 L229.9,365.2 L232.7,356.6 L238.8,357.6 L243.6,352.4 L251.2,365.2 L254.1,359.5 L262.7,372.9 L265.6,385.3 L268.4,380.0 L274.2,381.5 L276.6,372.3 L279.9,385.3 L283.7,384.3 L292.3,392.9 L297.0,401.0 L301.8,396.8 L307.6,386.3 L313.3,399.6 L317.1,383.4 L324.8,380.5 L328.6,390.0 L332.4,392.0 L335.3,376.7 L344.8,390.0 L349.6,362.4 L355.3,365.2 L359.1,369.1 L363.0,368.1 L366.8,350.9 L370.6,348.0 L374.4,350.5 L384.0,340.4 L391.6,339.5 L395.4,345.2 L401.2,341.4 L405.0,339.8 L408.8,347.1 L418.3,338.5 L426.0,357.6 L433.6,345.2 L440.3,356.6 L445.0,343.7 L455.0,341.4 L456.9,339.5 L458.8,356.6 L462.6,350.0 L470.3,361.4 L475.0,359.5 L478.9,353.8 L485.6,355.7 L492.2,356.6 L496.0,376.7 L501.8,365.2 L503.7,367.2 L507.5,354.7 L512.3,351.9 L518.0,345.2 L521.8,347.1 L529.5,358.6 L531.4,352.8 L539.0,352.8 L543.8,347.1 L545.7,336.6 L548.6,342.3 L557.2,337.2 L560.0,342.3 L568.6,340.4 L571.5,340.4 L577.2,354.7 L583.0,355.7 L586.8,373.8 L590.6,372.9 L592.5,377.7 L596.3,370.4 L601.1,384.3 L607.8,381.5 L612.6,374.8 L617.3,364.3 L623.0,371.0 L626.9,371.9 L633.6,385.3 L636.4,386.3 L646.0,372.9 L649.8,376.7 L654.6,358.6 L660.3,372.9 L663.2,371.9 L667.0,361.4 L671.8,355.7 L675.0,359.5 L676.9,356.6 L682.6,364.3 L685.5,357.6 L688.4,354.7 L691.2,347.1 L696.0,350.0 L698.9,339.5 L701.7,349.0 L711.3,371.0 L713.2,385.3 L718.9,396.8 L724.7,388.2 L727.5,383.4 L733.3,385.3 L739.0,369.6 L747.6,379.6 L753.3,371.0 L757.1,374.8 L761.9,360.5 L767.6,353.2 L770.5,363.3 L778.1,366.2 L784.8,373.8 L786.7,384.3 L790.5,383.4 L792.5,380.0 L795.3,388.7 L801.0,379.6 L806.8,380.5 L812.5,371.9 L815.4,380.5 L820.1,355.7 L825.9,359.5 L829.7,369.1 L833.5,367.2 L842.1,350.0 L845.9,347.1 L848.8,342.3 L851.7,356.3 L854.5,350.9 L858.3,350.9 L861.8,353.8" fill="none" stroke="#f29636" stroke-width="1"/>
<path d="M276.6,372.3 L279.9,385.3 L283.7,384.3 L292.3,392.9 L297.0,401.0" fill="none" stroke="#30d030" stroke-width="1.1"/>
<path d="M307.6,386.3 L313.3,399.6" fill="none" stroke="#30d030" stroke-width="1.1"/>
<path d="M324.8,380.5 L328.6,390.0 L332.4,392.0" fill="none" stroke="#30d030" stroke-width="1.1"/>
<path d="M711.3,371.0 L713.2,385.3 L718.9,396.8 L724.7,388.2" fill="none" stroke="#30d030" stroke-width="1.1"/>
<path d="M792.5,380.0 L795.3,388.7" fill="none" stroke="#30d030" stroke-width="1.1"/>
</g>
<rect x="18" y="329" width="17" height="12" fill="#3c424b"/>
<text x="19.5" y="340" font-size="11" fill="#f08a30" textLength="14.5" lengthAdjust="spacingAndGlyphs">RSI</text>
<path d="M17.5,381.5 H76.0 Q78.0,381.5 78.0,383.5 V398.5 Q78.0,400.5 76.0,400.5 H17.5 Z" fill="#5a6a80" stroke="#b8cad8" stroke-width="1"/>
<path d="M18.0,381 V408" stroke="#c8e8e8" stroke-width="2"/>
<text x="25.0" y="395" font-size="11" fill="#f2f5f8" stroke="#f2f5f8" stroke-width="0.15" textLength="46" lengthAdjust="spacing">Авг 2020</text>
<path d="M170.5,381.5 H228.0 Q230.0,381.5 230.0,383.5 V398.5 Q230.0,400.5 228.0,400.5 H170.5 Z" fill="#5a6a80" stroke="#b8cad8" stroke-width="1"/>
<path d="M171.0,381 V408" stroke="#c8e8e8" stroke-width="2"/>
<text x="178.0" y="395" font-size="11" fill="#f2f5f8" stroke="#f2f5f8" stroke-width="0.15" textLength="46" lengthAdjust="spacing">Сен 2020</text>
<path d="M506.5,381.5 H564.0 Q566.0,381.5 566.0,383.5 V398.5 Q566.0,400.5 564.0,400.5 H506.5 Z" fill="#5a6a80" stroke="#b8cad8" stroke-width="1"/>
<path d="M507.0,381 V408" stroke="#c8e8e8" stroke-width="2"/>
<text x="514.0" y="395" font-size="11" fill="#f2f5f8" stroke="#f2f5f8" stroke-width="0.15" textLength="46" lengthAdjust="spacing">Окт 2020</text>
<path d="M842.5,381.5 H902.0 Q904.0,381.5 904.0,383.5 V398.5 Q904.0,400.5 902.0,400.5 H842.5 Z" fill="#5a6a80" stroke="#b8cad8" stroke-width="1"/>
<path d="M843.0,381 V408" stroke="#c8e8e8" stroke-width="2"/>
<text x="850.0" y="395" font-size="11" fill="#f2f5f8" stroke="#f2f5f8" stroke-width="0.15" textLength="46" lengthAdjust="spacing">Нов 2020</text>
<rect x="901" y="198" width="48" height="21" fill="#ffffff"/>
<text x="910" y="212.3" font-size="11" fill="#3a3a4a" textLength="32.2" lengthAdjust="spacingAndGlyphs">104.73</text>
<rect x="18" y="41" width="275" height="13" fill="#3c424b"/>
<text x="19.3" y="52.5" font-size="11" fill="#2424ff" textLength="133.6" lengthAdjust="spacingAndGlyphs">Exponential_Moving_Average</text>
<text x="157.4" y="52.5" font-size="11" fill="#ff2424" textLength="133.6" lengthAdjust="spacingAndGlyphs">Exponential_Moving_Average</text>
<rect x="17" y="40" width="31" height="22" fill="#f0f0f0"/>
<rect x="17" y="40" width="31" height="5" fill="#d4d4d4"/>
<rect x="21" y="48" width="10" height="10" rx="2" fill="url(#lr)" stroke="#901010" stroke-width="0.6"/>
<rect x="34" y="48" width="10" height="10" rx="2" fill="url(#lb)" stroke="#0c5a98" stroke-width="0.6"/>
</svg></body></html>
